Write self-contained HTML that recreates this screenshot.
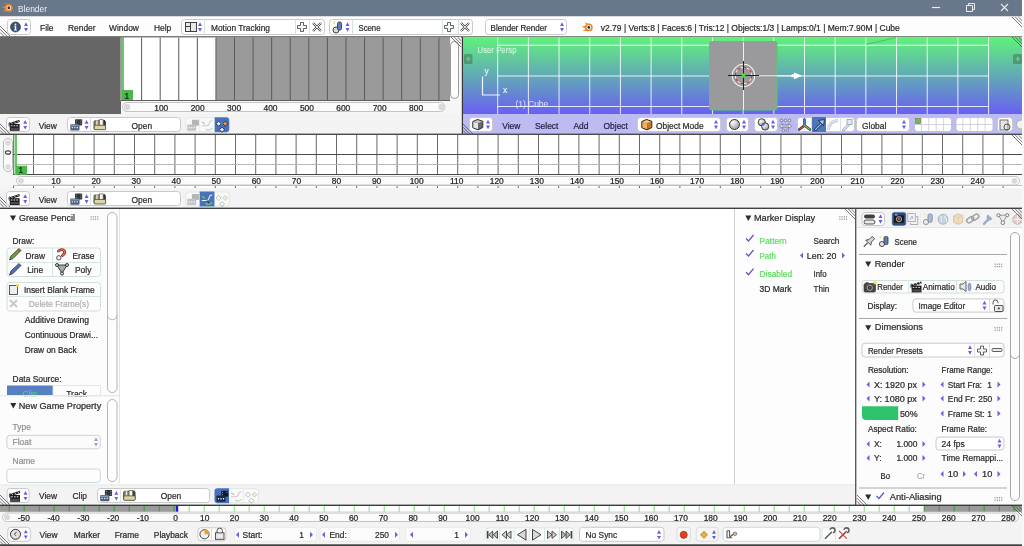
<!DOCTYPE html><html><head><meta charset="utf-8"><style>html,body{margin:0;padding:0;background:#fff;width:1024px;height:546px;overflow:hidden}svg{display:block;will-change:transform}text{font-family:"Liberation Sans",sans-serif}</style></head><body><svg width="1024" height="546" viewBox="0 0 1024 546" font-family="Liberation Sans, sans-serif">
<defs><linearGradient id="g3d" x1="0" y1="0" x2="0" y2="1"><stop offset="0" stop-color="#60f27a"/><stop offset="0.5" stop-color="#62aab6"/><stop offset="1" stop-color="#6860f2"/></linearGradient></defs>
<rect x="0" y="0" width="1024" height="546" fill="#ffffff" />
<rect x="0" y="0" width="1022" height="16.5" fill="#687789" />
<g><circle cx="8.8" cy="7.9" r="3.9" fill="#e8862a"/><path d="M6.5,4.8 L4,3 L8.5,4 Z M5.5,6 L1.8,7.2 L5.5,8.8 Z M5.8,9.5 L2.5,11.2 L7.5,11.6 Z" fill="#e8862a"/><circle cx="8.8" cy="7.9" r="2.4" fill="#f4e0c8"/><circle cx="8.8" cy="7.9" r="1.3" fill="#1a3050"/></g>
<text x="18" y="11.9" font-size="9.66" fill="#eef1f5" stroke="#eef1f5" stroke-width="0" text-anchor="start" textLength="29" lengthAdjust="spacingAndGlyphs" >Blender</text>
<line x1="932" y1="7.5" x2="940" y2="7.5" stroke="#e8ecf0" stroke-width="1.2" />
<path d="M966.5,5.5 h6 v6 h-6 z M968.5,5.5 v-2 h6 v6 h-2" fill="none" stroke="#e8ecf0" stroke-width="1"/>
<path d="M1001,4 L1008,11 M1008,4 L1001,11" stroke="#e8ecf0" stroke-width="1.1"/>
<rect x="0" y="16.5" width="1022" height="19.5" fill="#fdfdfd" />
<line x1="0" y1="26.0" x2="10.0" y2="36" stroke="#505050" stroke-width="0.8" />
<line x1="0" y1="29.2" x2="6.8" y2="36" stroke="#505050" stroke-width="0.8" />
<line x1="0" y1="32.4" x2="3.5999999999999996" y2="36" stroke="#505050" stroke-width="0.8" />
<rect x="7.5" y="19.5" width="23" height="15" fill="#ffffff" stroke="#c9c9c9" stroke-width="1" rx="3" />
<circle cx="15.5" cy="27" r="5" fill="#3b5175" stroke="#202a40" stroke-width="0.6"/><circle cx="15.5" cy="24.3" r="0.9" fill="#fff"/><path d="M14.2,25.8 h2 v4 h0.8 v0.8 h-3 v-0.8 h0.8 v-3.2 h-0.6 z" fill="#fff"/>
<path d="M24,25.9 L26,22.3 L28,25.9 Z M24,28.1 L26,31.7 L28,28.1 Z" fill="#6b5fe0"/>
<text x="40" y="30.5" font-size="8.82" fill="#2a2a2a" stroke="#2a2a2a" stroke-width="0.22" text-anchor="start" textLength="13.53" lengthAdjust="spacingAndGlyphs" >File</text>
<text x="68" y="30.5" font-size="8.82" fill="#2a2a2a" stroke="#2a2a2a" stroke-width="0.22" text-anchor="start" textLength="27.55" lengthAdjust="spacingAndGlyphs" >Render</text>
<text x="109" y="30.5" font-size="8.82" fill="#2a2a2a" stroke="#2a2a2a" stroke-width="0.22" text-anchor="start" textLength="29.88" lengthAdjust="spacingAndGlyphs" >Window</text>
<text x="154" y="30.5" font-size="8.82" fill="#2a2a2a" stroke="#2a2a2a" stroke-width="0.22" text-anchor="start" textLength="17.28" lengthAdjust="spacingAndGlyphs" >Help</text>
<rect x="181.5" y="19.5" width="143" height="15" fill="#ffffff" stroke="#c9c9c9" stroke-width="1" rx="3" />
<line x1="204.5" y1="19.5" x2="204.5" y2="34.5" stroke="#d6e2e0" stroke-width="1" />
<line x1="295.5" y1="19.5" x2="295.5" y2="34.5" stroke="#d6e2e0" stroke-width="1" />
<line x1="309.5" y1="19.5" x2="309.5" y2="34.5" stroke="#d6e2e0" stroke-width="1" />
<rect x="185.5" y="22.5" width="11" height="9" fill="#e8e8e8" stroke="#404040" stroke-width="1"/><line x1="190.5" y1="22.5" x2="190.5" y2="31.5" stroke="#404040"/><line x1="185.5" y1="26.5" x2="190.5" y2="26.5" stroke="#404040"/>
<path d="M198,25.9 L200,22.3 L202,25.9 Z M198,28.1 L200,31.7 L202,28.1 Z" fill="#6b5fe0"/>
<text x="211" y="30.5" font-size="8.82" fill="#2a2a2a" stroke="#2a2a2a" stroke-width="0.22" text-anchor="start" textLength="59" lengthAdjust="spacingAndGlyphs" >Motion Tracking</text>
<path d="M300.5,22.5 h3 v3 h3 v3 h-3 v3 h-3 v-3 h-3 v-3 h3 z" fill="#f4f4f4" stroke="#505050" stroke-width="0.9"/>
<path d="M313,23 L321,31 M321,23 L313,31" stroke="#505050" stroke-width="2.2"/><path d="M313,23 L321,31 M321,23 L313,31" stroke="#f0f0f0" stroke-width="0.9"/>
<rect x="329.5" y="19.5" width="143" height="15" fill="#ffffff" stroke="#c9c9c9" stroke-width="1" rx="3" />
<line x1="352.5" y1="19.5" x2="352.5" y2="34.5" stroke="#d6e2e0" stroke-width="1" />
<line x1="442.5" y1="19.5" x2="442.5" y2="34.5" stroke="#d6e2e0" stroke-width="1" />
<line x1="458.5" y1="19.5" x2="458.5" y2="34.5" stroke="#d6e2e0" stroke-width="1" />
<circle cx="336" cy="30" r="3" fill="#d8d8d8" stroke="#303030" stroke-width="0.9"/><rect x="337.5" y="22" width="4" height="8" rx="1.5" fill="#5b7fb8" stroke="#303030" stroke-width="0.8"/><circle cx="334" cy="22.5" r="1.2" fill="#f0e060"/>
<path d="M345.5,25.9 L347.5,22.3 L349.5,25.9 Z M345.5,28.1 L347.5,31.7 L349.5,28.1 Z" fill="#6b5fe0"/>
<text x="358.5" y="30.5" font-size="8.82" fill="#2a2a2a" stroke="#2a2a2a" stroke-width="0.22" text-anchor="start" textLength="22" lengthAdjust="spacingAndGlyphs" >Scene</text>
<path d="M447.5,22.5 h3 v3 h3 v3 h-3 v3 h-3 v-3 h-3 v-3 h3 z" fill="#f4f4f4" stroke="#505050" stroke-width="0.9"/>
<path d="M461,23 L469,31 M469,23 L461,31" stroke="#505050" stroke-width="2.2"/><path d="M461,23 L469,31 M469,23 L461,31" stroke="#f0f0f0" stroke-width="0.9"/>
<rect x="485.5" y="19.5" width="81" height="15" fill="#ffffff" stroke="#c9c9c9" stroke-width="1" rx="3" />
<text x="490.5" y="30.5" font-size="8.82" fill="#2a2a2a" stroke="#2a2a2a" stroke-width="0.22" text-anchor="start" textLength="56.5" lengthAdjust="spacingAndGlyphs" >Blender Render</text>
<path d="M560,25.9 L562,22.3 L564,25.9 Z M560,28.1 L562,31.7 L564,28.1 Z" fill="#6b5fe0"/>
<g transform="translate(580,19.5)"><circle cx="8.8" cy="7.9" r="3.9" fill="#e8862a"/><path d="M6.5,4.8 L4,3 L8.5,4 Z M5.5,6 L1.8,7.2 L5.5,8.8 Z M5.8,9.5 L2.5,11.2 L7.5,11.6 Z" fill="#e8862a"/><circle cx="8.8" cy="7.9" r="2.4" fill="#f8f0e8"/><circle cx="8.8" cy="7.9" r="1.3" fill="#1a3050"/></g>
<text x="600.8" y="30.5" font-size="8.82" fill="#2a2a2a" stroke="#2a2a2a" stroke-width="0.22" text-anchor="start" textLength="299" lengthAdjust="spacingAndGlyphs" >v2.79 | Verts:8 | Faces:6 | Tris:12 | Objects:1/3 | Lamps:0/1 | Mem:7.90M | Cube</text>
<line x1="1012.0" y1="17" x2="1022" y2="27.0" stroke="#505050" stroke-width="0.8" />
<line x1="1015.2" y1="17" x2="1022" y2="23.8" stroke="#505050" stroke-width="0.8" />
<line x1="1018.4" y1="17" x2="1022" y2="20.6" stroke="#505050" stroke-width="0.8" />
<rect x="0" y="36" width="462" height="0.8" fill="#8a8a8a" />
<rect x="0" y="36.6" width="462" height="1" fill="#4a4a4a" />
<rect x="0" y="37" width="121" height="77" fill="#666666" />
<rect x="120" y="37.6" width="330" height="63" fill="#9a9a9a" />
<rect x="124" y="37.6" width="92" height="63" fill="#ffffff" />
<rect x="141.1" y="37.6" width="1" height="63" fill="#5a5a5a" />
<rect x="159.68" y="37.6" width="1" height="63" fill="#5a5a5a" />
<rect x="178.26" y="37.6" width="1" height="63" fill="#5a5a5a" />
<rect x="196.83999999999997" y="37.6" width="1" height="63" fill="#5a5a5a" />
<rect x="215.42" y="37.6" width="1" height="63" fill="#5a5a5a" />
<rect x="234.0" y="37.6" width="1" height="63" fill="#5a5a5a" />
<rect x="252.57999999999998" y="37.6" width="1" height="63" fill="#5a5a5a" />
<rect x="271.15999999999997" y="37.6" width="1" height="63" fill="#5a5a5a" />
<rect x="289.74" y="37.6" width="1" height="63" fill="#5a5a5a" />
<rect x="308.31999999999994" y="37.6" width="1" height="63" fill="#5a5a5a" />
<rect x="326.9" y="37.6" width="1" height="63" fill="#5a5a5a" />
<rect x="345.48" y="37.6" width="1" height="63" fill="#5a5a5a" />
<rect x="364.05999999999995" y="37.6" width="1" height="63" fill="#5a5a5a" />
<rect x="382.64" y="37.6" width="1" height="63" fill="#5a5a5a" />
<rect x="401.22" y="37.6" width="1" height="63" fill="#5a5a5a" />
<rect x="419.79999999999995" y="37.6" width="1" height="63" fill="#5a5a5a" />
<rect x="438.38" y="37.6" width="1" height="63" fill="#5a5a5a" />
<rect x="121.5" y="37.6" width="2.5" height="63" fill="#6cc46c" />
<rect x="122" y="90" width="11" height="10.5" fill="#4cb84c" />
<text x="124.5" y="98.5" font-size="8.82" fill="#102010" stroke="#102010" stroke-width="0.22" text-anchor="start" textLength="4.67" lengthAdjust="spacingAndGlyphs" >1</text>
<rect x="121" y="100" width="341" height="1" fill="#606060" />
<rect x="121" y="101" width="341" height="13" fill="#f6f6f6" />
<rect x="122.5" y="102.5" width="322.5" height="9" rx="4.5" fill="#fbfbfb" stroke="#c4c4c4" stroke-width="1"/>
<circle cx="127" cy="107" r="3.2" fill="#d9d9d9"/>
<circle cx="441.5" cy="107" r="3.2" fill="#d9d9d9"/>
<text x="161.3" y="110.5" font-size="8.82" fill="#202020" stroke="#202020" stroke-width="0.22" text-anchor="middle" textLength="14.01" lengthAdjust="spacingAndGlyphs" >100</text>
<text x="197.70000000000002" y="110.5" font-size="8.82" fill="#202020" stroke="#202020" stroke-width="0.22" text-anchor="middle" textLength="14.01" lengthAdjust="spacingAndGlyphs" >200</text>
<text x="234.10000000000002" y="110.5" font-size="8.82" fill="#202020" stroke="#202020" stroke-width="0.22" text-anchor="middle" textLength="14.01" lengthAdjust="spacingAndGlyphs" >300</text>
<text x="270.5" y="110.5" font-size="8.82" fill="#202020" stroke="#202020" stroke-width="0.22" text-anchor="middle" textLength="14.01" lengthAdjust="spacingAndGlyphs" >400</text>
<text x="306.9" y="110.5" font-size="8.82" fill="#202020" stroke="#202020" stroke-width="0.22" text-anchor="middle" textLength="14.01" lengthAdjust="spacingAndGlyphs" >500</text>
<text x="343.3" y="110.5" font-size="8.82" fill="#202020" stroke="#202020" stroke-width="0.22" text-anchor="middle" textLength="14.01" lengthAdjust="spacingAndGlyphs" >600</text>
<text x="379.7" y="110.5" font-size="8.82" fill="#202020" stroke="#202020" stroke-width="0.22" text-anchor="middle" textLength="14.01" lengthAdjust="spacingAndGlyphs" >700</text>
<text x="416.1" y="110.5" font-size="8.82" fill="#202020" stroke="#202020" stroke-width="0.22" text-anchor="middle" textLength="14.01" lengthAdjust="spacingAndGlyphs" >800</text>
<rect x="450" y="37" width="12" height="64" fill="#f6f6f6" />
<rect x="450.5" y="41.5" width="8" height="57" rx="4" fill="#fdfdfd" stroke="#9a9a9a" stroke-width="1"/>
<line x1="451.0" y1="37" x2="461" y2="47.0" stroke="#505050" stroke-width="0.8" />
<line x1="454.2" y1="37" x2="461" y2="43.8" stroke="#505050" stroke-width="0.8" />
<line x1="457.4" y1="37" x2="461" y2="40.6" stroke="#505050" stroke-width="0.8" />
<rect x="0" y="114" width="462" height="20" fill="#f3f3f3" />
<line x1="0" y1="124.0" x2="10.0" y2="134" stroke="#505050" stroke-width="0.8" />
<line x1="0" y1="127.2" x2="6.8" y2="134" stroke="#505050" stroke-width="0.8" />
<line x1="0" y1="130.4" x2="3.5999999999999996" y2="134" stroke="#505050" stroke-width="0.8" />
<rect x="6.5" y="117.5" width="23" height="14" fill="#ffffff" stroke="#c9c9c9" stroke-width="1" rx="3" />
<g transform="translate(8.6,118.6)"><path d="M0.2,4.6 L10.6,1.2 L11.3,3.4 L0.9,6.8 Z" fill="#202228"/><path d="M2.6,3.9 L4.2,5.8 M5.6,2.9 L7.2,4.8 M8.6,1.9 L10.2,3.8" stroke="#d8dce0" stroke-width="0.9"/><rect x="1.2" y="5.4" width="9.8" height="6.8" fill="#1c1c20"/><path d="M2.2,7.2 h1.6 M5,7.2 h1.6 M7.8,7.2 h1.6" stroke="#e8e8e8" stroke-width="1"/><rect x="2" y="9.2" width="8.2" height="2.2" fill="#4a4a50"/><path d="M1.2,3.5 a1.6,2.6 0 0 0 0,4.6" stroke="#4a6a98" stroke-width="1.1" fill="none"/></g>
<path d="M23.2,123.7 L25.2,120.1 L27.2,123.7 Z M23.2,125.89999999999999 L25.2,129.5 L27.2,125.89999999999999 Z" fill="#6b5fe0"/>
<text x="38.7" y="128.6" font-size="8.82" fill="#2a2a2a" stroke="#2a2a2a" stroke-width="0.22" text-anchor="start" textLength="18.05" lengthAdjust="spacingAndGlyphs" >View</text>
<rect x="67.5" y="117.5" width="113" height="14" fill="#ffffff" stroke="#c9c9c9" stroke-width="1" rx="3" />
<line x1="90.5" y1="117.5" x2="90.5" y2="131.5" stroke="#d6e2e0" stroke-width="1" />
<g transform="translate(70.3,119.3)"><rect x="4.7" y="0" width="7.2" height="6.1" rx="0.8" fill="#30343c"/><path d="M6,1.2 v1 M6,3.6 v1 M10.6,1.2 v1 M10.6,3.6 v1" stroke="#b8c0c8" stroke-width="0.8"/><rect x="0" y="4.9" width="9.2" height="6.4" rx="0.8" fill="#50607a"/><rect x="0.8" y="5.7" width="7.6" height="1.2" fill="#8aa0c8"/><path d="M1.4,8.4 h1.2 M3.9,8.4 h1.2 M6.4,8.4 h1.2" stroke="#f0f4ff" stroke-width="1.3"/></g>
<path d="M84.6,123.7 L86.6,120.1 L88.6,123.7 Z M84.6,125.89999999999999 L86.6,129.5 L88.6,125.89999999999999 Z" fill="#6b5fe0"/>
<g transform="translate(94,119.7)"><rect x="0" y="1" width="11.5" height="8.8" rx="1.2" fill="#8a8670" stroke="#3a3828" stroke-width="0.8"/><rect x="5.5" y="0" width="3.6" height="6" fill="#f4f4f0" stroke="#505040" stroke-width="0.6"/><rect x="9.6" y="0.4" width="1.4" height="5.4" fill="#303028"/><rect x="2.2" y="0.6" width="1.4" height="5.4" fill="#e8e4d8"/><path d="M0.2,5.6 H11.6 V9.2 a0.8,0.8 0 0 1 -0.8,0.8 H1 a0.8,0.8 0 0 1 -0.8,-0.8 Z" fill="#ddd5a8" stroke="#4a4630" stroke-width="0.7"/></g>
<text x="141.8" y="128.6" font-size="8.82" fill="#2a2a2a" stroke="#2a2a2a" stroke-width="0.22" text-anchor="middle" textLength="20.55" lengthAdjust="spacingAndGlyphs" >Open</text>
<rect x="185.7" y="117.7" width="43.5" height="14" rx="3" fill="#fafafa" stroke="#e0e6e4" stroke-width="1"/>
<line x1="199.7" y1="118.2" x2="199.7" y2="131.2" stroke="#e4ecea"/><line x1="214.39999999999998" y1="118.2" x2="214.39999999999998" y2="131.2" stroke="#e4ecea"/>
<path d="M214.7,117.2 h11.5 a3,3 0 0 1 3,3 v9 a3,3 0 0 1 -3,3 h-11.5 z" fill="#4a72b8"/>
<g transform="translate(187.2,119.7)" opacity="0.45"><rect x="4.7" y="0" width="7" height="6" rx="0.8" fill="#606060"/><rect x="0" y="4.8" width="9" height="6.2" rx="0.8" fill="#7a8290"/><path d="M1.4,8 h1.2 M3.9,8 h1.2 M6.4,8 h1.2" stroke="#f0f4ff" stroke-width="1.3"/></g>
<g transform="translate(200.7,119.2)" opacity="0.5"><path d="M1,6.5 H6 Q8,6.5 8.5,4 Q9,1.5 11.5,1.5" stroke="#a0a0a0" stroke-width="1.1" fill="none"/><path d="M1,3 Q3,3 4,5" stroke="#909090" stroke-width="1.2" fill="none"/><path d="M5,10 Q8,12 11.5,9" stroke="#90c090" stroke-width="1.4" fill="none"/></g>
<g transform="translate(215.2,119.2)"><path d="M4,4.5 H9" stroke="#c0c0c0" stroke-width="1"/><path d="M0.8999999999999999,4.5 L3.5,1.9 L6.1,4.5 L3.5,7.1 Z" fill="#d8e4f4" stroke="#102040" stroke-width="0.8"/><path d="M7.4,4.5 L10,1.9 L12.6,4.5 L10,7.1 Z" fill="#f09050" stroke="#102040" stroke-width="0.8"/><path d="M4.199999999999999,10.5 L6.8,7.9 L9.4,10.5 L6.8,13.1 Z" fill="#d8e4f4" stroke="#102040" stroke-width="0.8"/></g>
<rect x="461" y="36" width="561" height="0.8" fill="#8a9a8a" />
<rect x="461" y="36.6" width="561" height="1" fill="#4a5a4a" />
<rect x="461.8" y="37" width="1.3" height="97" fill="#383838" />
<rect x="463" y="37" width="559" height="77" fill="url(#g3d)" />
<line x1="497.7" y1="37.6" x2="497.7" y2="114" stroke="rgba(255,255,255,0.85)" stroke-width="1" />
<line x1="528.38" y1="37.6" x2="528.38" y2="114" stroke="rgba(255,255,255,0.85)" stroke-width="1" />
<line x1="559.06" y1="37.6" x2="559.06" y2="114" stroke="rgba(255,255,255,0.85)" stroke-width="1" />
<line x1="589.74" y1="37.6" x2="589.74" y2="114" stroke="rgba(255,255,255,0.85)" stroke-width="1" />
<line x1="620.42" y1="37.6" x2="620.42" y2="114" stroke="rgba(255,255,255,0.85)" stroke-width="1" />
<line x1="651.1" y1="37.6" x2="651.1" y2="114" stroke="rgba(255,255,255,0.85)" stroke-width="1" />
<line x1="681.78" y1="37.6" x2="681.78" y2="114" stroke="rgba(255,255,255,0.85)" stroke-width="1" />
<line x1="712.46" y1="37.6" x2="712.46" y2="114" stroke="rgba(255,255,255,0.85)" stroke-width="1" />
<line x1="743.14" y1="37.6" x2="743.14" y2="114" stroke="rgba(255,255,255,0.85)" stroke-width="1" />
<line x1="773.8199999999999" y1="37.6" x2="773.8199999999999" y2="114" stroke="rgba(255,255,255,0.85)" stroke-width="1" />
<line x1="804.5" y1="37.6" x2="804.5" y2="114" stroke="rgba(255,255,255,0.85)" stroke-width="1" />
<line x1="835.1800000000001" y1="37.6" x2="835.1800000000001" y2="114" stroke="rgba(255,255,255,0.85)" stroke-width="1" />
<line x1="865.8599999999999" y1="37.6" x2="865.8599999999999" y2="114" stroke="rgba(255,255,255,0.85)" stroke-width="1" />
<line x1="896.54" y1="37.6" x2="896.54" y2="114" stroke="rgba(255,255,255,0.85)" stroke-width="1" />
<line x1="927.22" y1="37.6" x2="927.22" y2="114" stroke="rgba(255,255,255,0.85)" stroke-width="1" />
<line x1="957.9" y1="37.6" x2="957.9" y2="114" stroke="rgba(255,255,255,0.85)" stroke-width="1" />
<line x1="988.5799999999999" y1="37.6" x2="988.5799999999999" y2="114" stroke="rgba(255,255,255,0.85)" stroke-width="1" />
<line x1="497.7" y1="45.2" x2="988.5" y2="45.2" stroke="rgba(255,255,255,0.85)" stroke-width="1" />
<line x1="497.7" y1="76" x2="988.5" y2="76" stroke="rgba(255,255,255,0.85)" stroke-width="1" />
<line x1="497.7" y1="106.5" x2="988.5" y2="106.5" stroke="rgba(255,255,255,0.85)" stroke-width="1" />
<rect x="709.5" y="41.5" width="67.5" height="68.5" rx="2" fill="#9a9a9c" stroke="#4ad060" stroke-width="1"/>
<line x1="743.5" y1="42" x2="743.5" y2="110" stroke="rgba(255,255,255,0.85)" stroke-width="1" />
<line x1="756" y1="75.8" x2="792" y2="75.8" stroke="rgba(255,255,255,0.85)" stroke-width="1" />
<path d="M791.5,74.3 h2.5 v-1.8 L802.3,75.8 L794,79.2 v-1.9 h-2.5 Z" fill="#ffffff"/>
<circle cx="743.5" cy="75.5" r="11.2" fill="none" stroke="#f4f4f4" stroke-width="1.1"/>
<circle cx="743.5" cy="75.5" r="8.2" fill="none" stroke="#f0f0f0" stroke-width="1"/>
<circle cx="743.5" cy="75.5" r="8.2" fill="none" stroke="#d03030" stroke-width="1.1" stroke-dasharray="3 3.45"/>
<line x1="728" y1="75.5" x2="759" y2="75.5" stroke="#202020" stroke-width="1" />
<line x1="743.5" y1="61" x2="743.5" y2="90" stroke="#202020" stroke-width="1" />
<ellipse cx="743.5" cy="75.5" rx="1.8" ry="2.3" fill="#40e040"/>
<path d="M482.5,76.5 V95 H500" stroke="#ffffff" stroke-width="1.2" fill="none" opacity="0.9"/>
<text x="484.5" y="74" font-size="8.82" fill="rgba(255,255,255,0.8)" stroke="rgba(255,255,255,0.8)" stroke-width="0.22" text-anchor="start" textLength="4.2" lengthAdjust="spacingAndGlyphs" >y</text>
<text x="503" y="93" font-size="8.82" fill="rgba(255,255,255,0.8)" stroke="rgba(255,255,255,0.8)" stroke-width="0.22" text-anchor="start" textLength="4.2" lengthAdjust="spacingAndGlyphs" >x</text>
<text x="477.5" y="52.5" font-size="8.82" fill="rgba(255,255,255,0.7)" stroke="rgba(255,255,255,0.7)" stroke-width="0.1" text-anchor="start" textLength="39" lengthAdjust="spacingAndGlyphs" >User Persp</text>
<text x="515.5" y="106.5" font-size="8.82" fill="rgba(255,255,255,0.7)" stroke="rgba(255,255,255,0.7)" stroke-width="0.1" text-anchor="start" textLength="32.68" lengthAdjust="spacingAndGlyphs" >(1) Cube</text>
<rect x="464" y="54" width="8.5" height="10" fill="rgba(60,120,80,0.55)" rx="1.5" />
<path d="M466,59 h4.5 M468.25,56.75 v4.5" stroke="rgba(255,255,255,0.35)" stroke-width="1.2"/>
<rect x="1013" y="54" width="9" height="10" fill="rgba(60,120,80,0.55)" rx="1.5" />
<path d="M1015.5,59 h4.5 M1017.75,56.75 v4.5" stroke="rgba(255,255,255,0.35)" stroke-width="1.2"/>
<line x1="866" y1="44.5" x2="896" y2="37.6" stroke="#3a9a50" stroke-width="0.8" opacity="0.7"/>
<line x1="1012.0" y1="37" x2="1022" y2="47.0" stroke="#505050" stroke-width="0.8" />
<line x1="1015.2" y1="37" x2="1022" y2="43.8" stroke="#505050" stroke-width="0.8" />
<line x1="1018.4" y1="37" x2="1022" y2="40.6" stroke="#505050" stroke-width="0.8" />
<rect x="463" y="114" width="559" height="20" fill="#bcbcf2" />
<line x1="463" y1="124.0" x2="473.0" y2="134" stroke="#505050" stroke-width="0.8" />
<line x1="463" y1="127.2" x2="469.8" y2="134" stroke="#505050" stroke-width="0.8" />
<line x1="463" y1="130.4" x2="466.6" y2="134" stroke="#505050" stroke-width="0.8" />
<rect x="469.5" y="117.5" width="23" height="14" fill="#ffffff" stroke="#c9c9c9" stroke-width="1" rx="3" />
<g transform="translate(472.5,119.5)"><path d="M0.3,2 L5,0 L10.3,1.8 L10.3,8 L5.5,10.4 L0.3,8.2 Z" fill="#505050" stroke="#303030" stroke-width="1"/><path d="M0.8,2.4 L5.6,3.6 L5.6,9.8 L0.8,7.9 Z" fill="#e4e4e4"/><path d="M5.6,3.6 L9.8,2.2 L9.8,7.8 L5.6,9.8 Z" fill="#6a6a6a"/><path d="M0.8,2.4 L5,0.6 L9.8,2.2 L5.6,3.6 Z" fill="#c8c8c8"/></g>
<path d="M486,123.4 L488,119.8 L490,123.4 Z M486,125.6 L488,129.2 L490,125.6 Z" fill="#6b5fe0"/>
<text x="502.3" y="128.6" font-size="8.82" fill="#22224a" stroke="#22224a" stroke-width="0.22" text-anchor="start" textLength="18.05" lengthAdjust="spacingAndGlyphs" >View</text>
<text x="535" y="128.6" font-size="8.82" fill="#22224a" stroke="#22224a" stroke-width="0.22" text-anchor="start" textLength="23.35" lengthAdjust="spacingAndGlyphs" >Select</text>
<text x="573.5" y="128.6" font-size="8.82" fill="#22224a" stroke="#22224a" stroke-width="0.22" text-anchor="start" textLength="14.95" lengthAdjust="spacingAndGlyphs" >Add</text>
<text x="603.6" y="128.6" font-size="8.82" fill="#22224a" stroke="#22224a" stroke-width="0.22" text-anchor="start" textLength="24.28" lengthAdjust="spacingAndGlyphs" >Object</text>
<rect x="637.5" y="117.5" width="83" height="14" fill="#ffffff" stroke="#c9c9c9" stroke-width="1" rx="3" />
<g transform="translate(641.5,119.5)"><path d="M0.3,2 L5,0 L10.3,1.8 L10.3,8 L5.5,10.4 L0.3,8.2 Z" fill="#704010" stroke="#402008" stroke-width="1"/><path d="M0.8,2.4 L5.6,3.6 L5.6,9.8 L0.8,7.9 Z" fill="#f0b060"/><path d="M5.6,3.6 L9.8,2.2 L9.8,7.8 L5.6,9.8 Z" fill="#c07830"/><path d="M0.8,2.4 L5,0.6 L9.8,2.2 L5.6,3.6 Z" fill="#f8d090"/></g>
<text x="656" y="128.6" font-size="8.82" fill="#2a2a2a" stroke="#2a2a2a" stroke-width="0.22" text-anchor="start" textLength="47.62" lengthAdjust="spacingAndGlyphs" >Object Mode</text>
<path d="M714,123.4 L716,119.8 L718,123.4 Z M714,125.6 L716,129.2 L718,125.6 Z" fill="#6b5fe0"/>
<rect x="726.5" y="117.5" width="22" height="14" fill="#ffffff" stroke="#c9c9c9" stroke-width="1" rx="3" />
<defs><radialGradient id="ball" cx="0.35" cy="0.3" r="0.8"><stop offset="0" stop-color="#ffffff"/><stop offset="1" stop-color="#909090"/></radialGradient></defs><circle cx="734.5" cy="124.5" r="5" fill="url(#ball)" stroke="#303030" stroke-width="1"/>
<path d="M742,123.4 L744,119.8 L746,123.4 Z M742,125.6 L744,129.2 L746,125.6 Z" fill="#6b5fe0"/>
<rect x="754.5" y="117.5" width="23" height="14" fill="#ffffff" stroke="#c9c9c9" stroke-width="1" rx="3" />
<circle cx="761.8" cy="122.3" r="3.6" fill="url(#ball)" stroke="#303030" stroke-width="0.9"/><circle cx="765.2" cy="126.5" r="3.6" fill="url(#ball)" stroke="#303030" stroke-width="0.9"/><circle cx="763.5" cy="124.6" r="1.2" fill="#5070c0"/>
<path d="M771,123.4 L773,119.8 L775,123.4 Z M771,125.6 L773,129.2 L775,125.6 Z" fill="#6b5fe0"/>
<g transform="translate(778.5,118.5)" stroke="#606878" stroke-width="0.8" fill="#e8ecf4"><circle cx="3" cy="2" r="1.3"/><circle cx="7" cy="2" r="1.3"/><circle cx="11" cy="2" r="1.3"/><path d="M1,7.5 L3.5,5 V6.5 H10.5 V5 L13,7.5 L10.5,10 V8.5 H3.5 V10 Z"/><circle cx="5" cy="12" r="1.2"/><circle cx="9" cy="12" r="1.2"/></g>
<rect x="797.5" y="117.5" width="57" height="14" fill="#ffffff" stroke="#c9c9c9" stroke-width="1" rx="3" />
<line x1="811.5" y1="117.5" x2="811.5" y2="131.5" stroke="#d6e2e0" stroke-width="1" />
<line x1="840.5" y1="117.5" x2="840.5" y2="131.5" stroke="#d6e2e0" stroke-width="1" />
<rect x="812" y="117" width="14" height="15" fill="#4f77b8" />
<g transform="translate(798,118)"><path d="M6.5,1.5 V7.5 L1.2,11.5 M6.5,7.5 L12,11.5" stroke="#202020" stroke-width="2.4" fill="none" stroke-linecap="round"/><path d="M6.5,1.5 V7.5" stroke="#4a80e0" stroke-width="1.2" stroke-linecap="round"/><path d="M6.5,7.5 L1.2,11.5" stroke="#e05040" stroke-width="1.2" stroke-linecap="round"/><path d="M6.5,7.5 L12,11.5" stroke="#80d040" stroke-width="1.2" stroke-linecap="round"/></g>
<path d="M815.5,129.5 L821.5,123.5" stroke="#102040" stroke-width="2.6" stroke-linecap="round"/><path d="M815.5,129.5 L821.5,123.5" stroke="#a8c8f0" stroke-width="1.2" stroke-linecap="round"/><path d="M818.5,120.5 L824.5,119.5 L823.5,125.5 Z" fill="#a8c8f0" stroke="#102040" stroke-width="0.8"/>
<path d="M828.5,130 Q829,121 838,120.5" stroke="#8898b0" stroke-width="3" fill="none" opacity="0.6"/><path d="M828.5,130 Q829,121 838,120.5" stroke="#d8e4f4" stroke-width="1.6" fill="none"/>
<g opacity="0.8"><path d="M843.5,130 L849,124.5" stroke="#8898b0" stroke-width="2.6" stroke-linecap="round"/><path d="M843.5,130 L849,124.5" stroke="#d8e4f4" stroke-width="1.2"/><rect x="847" y="119.5" width="5" height="5" fill="#d8e4f4" stroke="#8898b0" stroke-width="1"/></g>
<rect x="856.5" y="117.5" width="53" height="14" fill="#ffffff" stroke="#c9c9c9" stroke-width="1" rx="3" />
<text x="862" y="128.6" font-size="8.82" fill="#2a2a2a" stroke="#2a2a2a" stroke-width="0.22" text-anchor="start" textLength="24.28" lengthAdjust="spacingAndGlyphs" >Global</text>
<path d="M902,123.4 L904,119.8 L906,123.4 Z M902,125.6 L904,129.2 L906,125.6 Z" fill="#6b5fe0"/>
<rect x="914.5" y="117.5" width="37" height="14" fill="#ffffff" stroke="#c0c0d8" stroke-width="1" rx="3" />
<line x1="921.4" y1="117.5" x2="921.4" y2="131.5" stroke="#c8c8d8" stroke-width="0.8" />
<line x1="928.8" y1="117.5" x2="928.8" y2="131.5" stroke="#c8c8d8" stroke-width="0.8" />
<line x1="936.2" y1="117.5" x2="936.2" y2="131.5" stroke="#c8c8d8" stroke-width="0.8" />
<line x1="943.6" y1="117.5" x2="943.6" y2="131.5" stroke="#c8c8d8" stroke-width="0.8" />
<line x1="914" y1="124.5" x2="952" y2="124.5" stroke="#c8c8d8" stroke-width="0.8" />
<rect x="956.0" y="117.5" width="37" height="14" fill="#ffffff" stroke="#c0c0d8" stroke-width="1" rx="3" />
<line x1="962.9" y1="117.5" x2="962.9" y2="131.5" stroke="#c8c8d8" stroke-width="0.8" />
<line x1="970.3" y1="117.5" x2="970.3" y2="131.5" stroke="#c8c8d8" stroke-width="0.8" />
<line x1="977.7" y1="117.5" x2="977.7" y2="131.5" stroke="#c8c8d8" stroke-width="0.8" />
<line x1="985.1" y1="117.5" x2="985.1" y2="131.5" stroke="#c8c8d8" stroke-width="0.8" />
<line x1="955.5" y1="124.5" x2="993.5" y2="124.5" stroke="#c8c8d8" stroke-width="0.8" />
<rect x="915.5" y="118.5" width="5" height="5" fill="#60c060" stroke="#806020" stroke-width="0.6" />
<rect x="997.5" y="117.5" width="15" height="14" fill="#ffffff" stroke="#c9c9c9" stroke-width="1" rx="3" />
<g transform="translate(1000,119)"><rect x="0" y="1" width="8" height="10" fill="#e8e8e8" stroke="#505050" stroke-width="0.8"/><circle cx="7" cy="8" r="3" fill="none" stroke="#505050" stroke-width="1"/></g>
<circle cx="1021" cy="124.5" r="4.5" fill="#f0f0f0" stroke="#a0a0a0" stroke-width="0.8"/>
<rect x="0" y="133.6" width="1022" height="1.4" fill="#4a4a4a" />
<rect x="0" y="135" width="1022" height="40" fill="#ffffff" />
<rect x="0" y="135" width="13" height="52" fill="#f6f6f6" />
<rect x="3.5" y="138.5" width="9" height="33" rx="4.5" fill="#fbfbfb" stroke="#b8b8b8" stroke-width="1"/>
<circle cx="8" cy="143" r="2.7" fill="#dadada"/><circle cx="8" cy="167" r="2.7" fill="#dadada"/>
<text transform="translate(11,152.5) rotate(-90)" font-size="8.4" fill="#202020" stroke="#202020" stroke-width="0.25" text-anchor="middle">0</text>
<rect x="13" y="135" width="1" height="40" fill="#808080" />
<rect x="33.0" y="135" width="1" height="40" fill="#6a6a6a" />
<rect x="53.2" y="135" width="1" height="40" fill="#6a6a6a" />
<rect x="73.4" y="135" width="1" height="40" fill="#6a6a6a" />
<rect x="93.6" y="135" width="1" height="40" fill="#6a6a6a" />
<rect x="113.8" y="135" width="1" height="40" fill="#6a6a6a" />
<rect x="134.0" y="135" width="1" height="40" fill="#6a6a6a" />
<rect x="154.2" y="135" width="1" height="40" fill="#6a6a6a" />
<rect x="174.4" y="135" width="1" height="40" fill="#6a6a6a" />
<rect x="194.6" y="135" width="1" height="40" fill="#6a6a6a" />
<rect x="214.79999999999998" y="135" width="1" height="40" fill="#6a6a6a" />
<rect x="235.0" y="135" width="1" height="40" fill="#6a6a6a" />
<rect x="255.2" y="135" width="1" height="40" fill="#6a6a6a" />
<rect x="275.4" y="135" width="1" height="40" fill="#6a6a6a" />
<rect x="295.59999999999997" y="135" width="1" height="40" fill="#6a6a6a" />
<rect x="315.8" y="135" width="1" height="40" fill="#6a6a6a" />
<rect x="336.0" y="135" width="1" height="40" fill="#6a6a6a" />
<rect x="356.2" y="135" width="1" height="40" fill="#6a6a6a" />
<rect x="376.4" y="135" width="1" height="40" fill="#6a6a6a" />
<rect x="396.59999999999997" y="135" width="1" height="40" fill="#6a6a6a" />
<rect x="416.8" y="135" width="1" height="40" fill="#6a6a6a" />
<rect x="437.0" y="135" width="1" height="40" fill="#6a6a6a" />
<rect x="457.2" y="135" width="1" height="40" fill="#6a6a6a" />
<rect x="477.4" y="135" width="1" height="40" fill="#6a6a6a" />
<rect x="497.59999999999997" y="135" width="1" height="40" fill="#6a6a6a" />
<rect x="517.8" y="135" width="1" height="40" fill="#6a6a6a" />
<rect x="538.0" y="135" width="1" height="40" fill="#6a6a6a" />
<rect x="558.1999999999999" y="135" width="1" height="40" fill="#6a6a6a" />
<rect x="578.4" y="135" width="1" height="40" fill="#6a6a6a" />
<rect x="598.6" y="135" width="1" height="40" fill="#6a6a6a" />
<rect x="618.8" y="135" width="1" height="40" fill="#6a6a6a" />
<rect x="639.0" y="135" width="1" height="40" fill="#6a6a6a" />
<rect x="659.1999999999999" y="135" width="1" height="40" fill="#6a6a6a" />
<rect x="679.4" y="135" width="1" height="40" fill="#6a6a6a" />
<rect x="699.6" y="135" width="1" height="40" fill="#6a6a6a" />
<rect x="719.8" y="135" width="1" height="40" fill="#6a6a6a" />
<rect x="740.0" y="135" width="1" height="40" fill="#6a6a6a" />
<rect x="760.1999999999999" y="135" width="1" height="40" fill="#6a6a6a" />
<rect x="780.4" y="135" width="1" height="40" fill="#6a6a6a" />
<rect x="800.6" y="135" width="1" height="40" fill="#6a6a6a" />
<rect x="820.8" y="135" width="1" height="40" fill="#6a6a6a" />
<rect x="841.0" y="135" width="1" height="40" fill="#6a6a6a" />
<rect x="861.1999999999999" y="135" width="1" height="40" fill="#6a6a6a" />
<rect x="881.4" y="135" width="1" height="40" fill="#6a6a6a" />
<rect x="901.6" y="135" width="1" height="40" fill="#6a6a6a" />
<rect x="921.8" y="135" width="1" height="40" fill="#6a6a6a" />
<rect x="942.0" y="135" width="1" height="40" fill="#6a6a6a" />
<rect x="962.1999999999999" y="135" width="1" height="40" fill="#6a6a6a" />
<rect x="982.4" y="135" width="1" height="40" fill="#6a6a6a" />
<rect x="1002.5999999999999" y="135" width="1" height="40" fill="#6a6a6a" />
<line x1="13" y1="154.5" x2="1022" y2="154.5" stroke="#4a4a4a" stroke-width="1" />
<line x1="13" y1="164.5" x2="1022" y2="164.5" stroke="#b8b8b8" stroke-width="1" />
<line x1="13" y1="174.5" x2="1022" y2="174.5" stroke="#4a4a4a" stroke-width="1" />
<rect x="14.5" y="135" width="2.5" height="40" fill="#6cc46c" />
<rect x="16" y="165.7" width="11" height="9" fill="#4cb84c" />
<text x="18.5" y="173" font-size="8.82" fill="#102010" stroke="#102010" stroke-width="0.22" text-anchor="start" textLength="4.67" lengthAdjust="spacingAndGlyphs" >1</text>
<line x1="1012.0" y1="135" x2="1022" y2="145.0" stroke="#505050" stroke-width="0.8" />
<line x1="1015.2" y1="135" x2="1022" y2="141.8" stroke="#505050" stroke-width="0.8" />
<line x1="1018.4" y1="135" x2="1022" y2="138.6" stroke="#505050" stroke-width="0.8" />
<rect x="13" y="175" width="1009" height="11" fill="#f6f6f6" />
<rect x="16.5" y="176.5" width="1003" height="8.5" rx="4.25" fill="#fbfbfb" stroke="#c4c4c4" stroke-width="1"/>
<circle cx="21" cy="180.8" r="2.9" fill="#d9d9d9"/><circle cx="1014.5" cy="180.8" r="2.9" fill="#d9d9d9"/>
<text x="56.0" y="184" font-size="8.82" fill="#202020" stroke="#202020" stroke-width="0.22" text-anchor="middle" textLength="9.34" lengthAdjust="spacingAndGlyphs" >10</text>
<text x="96.07" y="184" font-size="8.82" fill="#202020" stroke="#202020" stroke-width="0.22" text-anchor="middle" textLength="9.34" lengthAdjust="spacingAndGlyphs" >20</text>
<text x="136.14" y="184" font-size="8.82" fill="#202020" stroke="#202020" stroke-width="0.22" text-anchor="middle" textLength="9.34" lengthAdjust="spacingAndGlyphs" >30</text>
<text x="176.21" y="184" font-size="8.82" fill="#202020" stroke="#202020" stroke-width="0.22" text-anchor="middle" textLength="9.34" lengthAdjust="spacingAndGlyphs" >40</text>
<text x="216.28" y="184" font-size="8.82" fill="#202020" stroke="#202020" stroke-width="0.22" text-anchor="middle" textLength="9.34" lengthAdjust="spacingAndGlyphs" >50</text>
<text x="256.35" y="184" font-size="8.82" fill="#202020" stroke="#202020" stroke-width="0.22" text-anchor="middle" textLength="9.34" lengthAdjust="spacingAndGlyphs" >60</text>
<text x="296.42" y="184" font-size="8.82" fill="#202020" stroke="#202020" stroke-width="0.22" text-anchor="middle" textLength="9.34" lengthAdjust="spacingAndGlyphs" >70</text>
<text x="336.49" y="184" font-size="8.82" fill="#202020" stroke="#202020" stroke-width="0.22" text-anchor="middle" textLength="9.34" lengthAdjust="spacingAndGlyphs" >80</text>
<text x="376.56" y="184" font-size="8.82" fill="#202020" stroke="#202020" stroke-width="0.22" text-anchor="middle" textLength="9.34" lengthAdjust="spacingAndGlyphs" >90</text>
<text x="416.63" y="184" font-size="8.82" fill="#202020" stroke="#202020" stroke-width="0.22" text-anchor="middle" textLength="14.01" lengthAdjust="spacingAndGlyphs" >100</text>
<text x="456.7" y="184" font-size="8.82" fill="#202020" stroke="#202020" stroke-width="0.22" text-anchor="middle" textLength="13.39" lengthAdjust="spacingAndGlyphs" >110</text>
<text x="496.77" y="184" font-size="8.82" fill="#202020" stroke="#202020" stroke-width="0.22" text-anchor="middle" textLength="14.01" lengthAdjust="spacingAndGlyphs" >120</text>
<text x="536.84" y="184" font-size="8.82" fill="#202020" stroke="#202020" stroke-width="0.22" text-anchor="middle" textLength="14.01" lengthAdjust="spacingAndGlyphs" >130</text>
<text x="576.91" y="184" font-size="8.82" fill="#202020" stroke="#202020" stroke-width="0.22" text-anchor="middle" textLength="14.01" lengthAdjust="spacingAndGlyphs" >140</text>
<text x="616.98" y="184" font-size="8.82" fill="#202020" stroke="#202020" stroke-width="0.22" text-anchor="middle" textLength="14.01" lengthAdjust="spacingAndGlyphs" >150</text>
<text x="657.05" y="184" font-size="8.82" fill="#202020" stroke="#202020" stroke-width="0.22" text-anchor="middle" textLength="14.01" lengthAdjust="spacingAndGlyphs" >160</text>
<text x="697.12" y="184" font-size="8.82" fill="#202020" stroke="#202020" stroke-width="0.22" text-anchor="middle" textLength="14.01" lengthAdjust="spacingAndGlyphs" >170</text>
<text x="737.19" y="184" font-size="8.82" fill="#202020" stroke="#202020" stroke-width="0.22" text-anchor="middle" textLength="14.01" lengthAdjust="spacingAndGlyphs" >180</text>
<text x="777.26" y="184" font-size="8.82" fill="#202020" stroke="#202020" stroke-width="0.22" text-anchor="middle" textLength="14.01" lengthAdjust="spacingAndGlyphs" >190</text>
<text x="817.33" y="184" font-size="8.82" fill="#202020" stroke="#202020" stroke-width="0.22" text-anchor="middle" textLength="14.01" lengthAdjust="spacingAndGlyphs" >200</text>
<text x="857.4" y="184" font-size="8.82" fill="#202020" stroke="#202020" stroke-width="0.22" text-anchor="middle" textLength="14.01" lengthAdjust="spacingAndGlyphs" >210</text>
<text x="897.47" y="184" font-size="8.82" fill="#202020" stroke="#202020" stroke-width="0.22" text-anchor="middle" textLength="14.01" lengthAdjust="spacingAndGlyphs" >220</text>
<text x="937.54" y="184" font-size="8.82" fill="#202020" stroke="#202020" stroke-width="0.22" text-anchor="middle" textLength="14.01" lengthAdjust="spacingAndGlyphs" >230</text>
<text x="977.61" y="184" font-size="8.82" fill="#202020" stroke="#202020" stroke-width="0.22" text-anchor="middle" textLength="14.01" lengthAdjust="spacingAndGlyphs" >240</text>
<line x1="13" y1="185.5" x2="1022" y2="185.5" stroke="#c0c0c0" stroke-width="1" />
<rect x="12.8" y="186" width="1" height="2.5" fill="#6a6a6a" />
<rect x="33.0" y="186" width="1" height="2.5" fill="#6a6a6a" />
<rect x="53.2" y="186" width="1" height="2.5" fill="#6a6a6a" />
<rect x="73.4" y="186" width="1" height="2.5" fill="#6a6a6a" />
<rect x="93.6" y="186" width="1" height="2.5" fill="#6a6a6a" />
<rect x="113.8" y="186" width="1" height="2.5" fill="#6a6a6a" />
<rect x="134.0" y="186" width="1" height="2.5" fill="#6a6a6a" />
<rect x="154.2" y="186" width="1" height="2.5" fill="#6a6a6a" />
<rect x="174.4" y="186" width="1" height="2.5" fill="#6a6a6a" />
<rect x="194.6" y="186" width="1" height="2.5" fill="#6a6a6a" />
<rect x="214.79999999999998" y="186" width="1" height="2.5" fill="#6a6a6a" />
<rect x="235.0" y="186" width="1" height="2.5" fill="#6a6a6a" />
<rect x="255.2" y="186" width="1" height="2.5" fill="#6a6a6a" />
<rect x="275.4" y="186" width="1" height="2.5" fill="#6a6a6a" />
<rect x="295.59999999999997" y="186" width="1" height="2.5" fill="#6a6a6a" />
<rect x="315.8" y="186" width="1" height="2.5" fill="#6a6a6a" />
<rect x="336.0" y="186" width="1" height="2.5" fill="#6a6a6a" />
<rect x="356.2" y="186" width="1" height="2.5" fill="#6a6a6a" />
<rect x="376.4" y="186" width="1" height="2.5" fill="#6a6a6a" />
<rect x="396.59999999999997" y="186" width="1" height="2.5" fill="#6a6a6a" />
<rect x="416.8" y="186" width="1" height="2.5" fill="#6a6a6a" />
<rect x="437.0" y="186" width="1" height="2.5" fill="#6a6a6a" />
<rect x="457.2" y="186" width="1" height="2.5" fill="#6a6a6a" />
<rect x="477.4" y="186" width="1" height="2.5" fill="#6a6a6a" />
<rect x="497.59999999999997" y="186" width="1" height="2.5" fill="#6a6a6a" />
<rect x="517.8" y="186" width="1" height="2.5" fill="#6a6a6a" />
<rect x="538.0" y="186" width="1" height="2.5" fill="#6a6a6a" />
<rect x="558.1999999999999" y="186" width="1" height="2.5" fill="#6a6a6a" />
<rect x="578.4" y="186" width="1" height="2.5" fill="#6a6a6a" />
<rect x="598.6" y="186" width="1" height="2.5" fill="#6a6a6a" />
<rect x="618.8" y="186" width="1" height="2.5" fill="#6a6a6a" />
<rect x="639.0" y="186" width="1" height="2.5" fill="#6a6a6a" />
<rect x="659.1999999999999" y="186" width="1" height="2.5" fill="#6a6a6a" />
<rect x="679.4" y="186" width="1" height="2.5" fill="#6a6a6a" />
<rect x="699.6" y="186" width="1" height="2.5" fill="#6a6a6a" />
<rect x="719.8" y="186" width="1" height="2.5" fill="#6a6a6a" />
<rect x="740.0" y="186" width="1" height="2.5" fill="#6a6a6a" />
<rect x="760.1999999999999" y="186" width="1" height="2.5" fill="#6a6a6a" />
<rect x="780.4" y="186" width="1" height="2.5" fill="#6a6a6a" />
<rect x="800.6" y="186" width="1" height="2.5" fill="#6a6a6a" />
<rect x="820.8" y="186" width="1" height="2.5" fill="#6a6a6a" />
<rect x="841.0" y="186" width="1" height="2.5" fill="#6a6a6a" />
<rect x="861.1999999999999" y="186" width="1" height="2.5" fill="#6a6a6a" />
<rect x="881.4" y="186" width="1" height="2.5" fill="#6a6a6a" />
<rect x="901.6" y="186" width="1" height="2.5" fill="#6a6a6a" />
<rect x="921.8" y="186" width="1" height="2.5" fill="#6a6a6a" />
<rect x="942.0" y="186" width="1" height="2.5" fill="#6a6a6a" />
<rect x="962.1999999999999" y="186" width="1" height="2.5" fill="#6a6a6a" />
<rect x="982.4" y="186" width="1" height="2.5" fill="#6a6a6a" />
<rect x="1002.5999999999999" y="186" width="1" height="2.5" fill="#6a6a6a" />
<rect x="13" y="186" width="1" height="3" fill="#6a6a6a" />
<rect x="0" y="188" width="1022" height="20" fill="#f3f3f3" />
<rect x="0" y="186" width="13" height="2" fill="#f3f3f3" />
<line x1="0" y1="197.0" x2="10.0" y2="207" stroke="#505050" stroke-width="0.8" />
<line x1="0" y1="200.2" x2="6.8" y2="207" stroke="#505050" stroke-width="0.8" />
<line x1="0" y1="203.4" x2="3.5999999999999996" y2="207" stroke="#505050" stroke-width="0.8" />
<rect x="6.5" y="191.5" width="23" height="14" fill="#ffffff" stroke="#c9c9c9" stroke-width="1" rx="3" />
<g transform="translate(8.6,192.8)"><path d="M0.2,4.6 L10.6,1.2 L11.3,3.4 L0.9,6.8 Z" fill="#202228"/><path d="M2.6,3.9 L4.2,5.8 M5.6,2.9 L7.2,4.8 M8.6,1.9 L10.2,3.8" stroke="#d8dce0" stroke-width="0.9"/><rect x="1.2" y="5.4" width="9.8" height="6.8" fill="#1c1c20"/><path d="M2.2,7.2 h1.6 M5,7.2 h1.6 M7.8,7.2 h1.6" stroke="#e8e8e8" stroke-width="1"/><rect x="2" y="9.2" width="8.2" height="2.2" fill="#4a4a50"/><path d="M1.2,3.5 a1.6,2.6 0 0 0 0,4.6" stroke="#4a6a98" stroke-width="1.1" fill="none"/></g>
<path d="M23.2,197.9 L25.2,194.3 L27.2,197.9 Z M23.2,200.1 L25.2,203.7 L27.2,200.1 Z" fill="#6b5fe0"/>
<text x="38.7" y="202.8" font-size="8.82" fill="#2a2a2a" stroke="#2a2a2a" stroke-width="0.22" text-anchor="start" textLength="18.05" lengthAdjust="spacingAndGlyphs" >View</text>
<rect x="67.5" y="191.5" width="113" height="14" fill="#ffffff" stroke="#c9c9c9" stroke-width="1" rx="3" />
<line x1="90.5" y1="191.5" x2="90.5" y2="205.5" stroke="#d6e2e0" stroke-width="1" />
<g transform="translate(70.3,193.5)"><rect x="4.7" y="0" width="7.2" height="6.1" rx="0.8" fill="#30343c"/><path d="M6,1.2 v1 M6,3.6 v1 M10.6,1.2 v1 M10.6,3.6 v1" stroke="#b8c0c8" stroke-width="0.8"/><rect x="0" y="4.9" width="9.2" height="6.4" rx="0.8" fill="#50607a"/><rect x="0.8" y="5.7" width="7.6" height="1.2" fill="#8aa0c8"/><path d="M1.4,8.4 h1.2 M3.9,8.4 h1.2 M6.4,8.4 h1.2" stroke="#f0f4ff" stroke-width="1.3"/></g>
<path d="M84.6,197.9 L86.6,194.3 L88.6,197.9 Z M84.6,200.1 L86.6,203.7 L88.6,200.1 Z" fill="#6b5fe0"/>
<g transform="translate(94,193.9)"><rect x="0" y="1" width="11.5" height="8.8" rx="1.2" fill="#8a8670" stroke="#3a3828" stroke-width="0.8"/><rect x="5.5" y="0" width="3.6" height="6" fill="#f4f4f0" stroke="#505040" stroke-width="0.6"/><rect x="9.6" y="0.4" width="1.4" height="5.4" fill="#303028"/><rect x="2.2" y="0.6" width="1.4" height="5.4" fill="#e8e4d8"/><path d="M0.2,5.6 H11.6 V9.2 a0.8,0.8 0 0 1 -0.8,0.8 H1 a0.8,0.8 0 0 1 -0.8,-0.8 Z" fill="#ddd5a8" stroke="#4a4630" stroke-width="0.7"/></g>
<text x="141.8" y="202.8" font-size="8.82" fill="#2a2a2a" stroke="#2a2a2a" stroke-width="0.22" text-anchor="middle" textLength="20.55" lengthAdjust="spacingAndGlyphs" >Open</text>
<rect x="185.7" y="192.0" width="43.5" height="14" rx="3" fill="#fafafa" stroke="#e0e6e4" stroke-width="1"/>
<line x1="199.7" y1="192.5" x2="199.7" y2="205.5" stroke="#e4ecea"/><line x1="214.39999999999998" y1="192.5" x2="214.39999999999998" y2="205.5" stroke="#e4ecea"/>
<rect x="199.7" y="191.5" width="14.7" height="15" fill="#4a72b8"/>
<g transform="translate(187.2,194.0)" opacity="0.45"><rect x="4.7" y="0" width="7" height="6" rx="0.8" fill="#606060"/><rect x="0" y="4.8" width="9" height="6.2" rx="0.8" fill="#7a8290"/><path d="M1.4,8 h1.2 M3.9,8 h1.2 M6.4,8 h1.2" stroke="#f0f4ff" stroke-width="1.3"/></g>
<g transform="translate(200.7,193.5)"><path d="M1,7 H6 Q8,7 8.5,4 Q9,1.5 11.5,1.5" stroke="#f0f0f0" stroke-width="1.1" fill="none"/><path d="M1,3 Q3,3 4,5" stroke="#70d070" stroke-width="1.2" fill="none"/><path d="M5,10 Q8,12 11.5,9" stroke="#70d070" stroke-width="1.4" fill="none"/><path d="M6,7 Q8,8 8.5,10" stroke="#102040" stroke-width="0.9" fill="none"/></g>
<g transform="translate(215.2,193.5)" opacity="0.6"><path d="M0.8999999999999999,4.5 L3.5,1.9 L6.1,4.5 L3.5,7.1 Z" fill="none" stroke="#808080" stroke-width="0.8"/><path d="M7.4,4.5 L10,1.9 L12.6,4.5 L10,7.1 Z" fill="#f0d8c0" stroke="#c0a080" stroke-width="0.8"/><path d="M4.199999999999999,10.5 L6.8,7.9 L9.4,10.5 L6.8,13.1 Z" fill="none" stroke="#808080" stroke-width="0.8"/></g>
<rect x="0" y="207.6" width="1022" height="1.5" fill="#404040" />
<rect x="0" y="209" width="120" height="279" fill="#fcfcfc" />
<line x1="119.5" y1="209" x2="119.5" y2="488" stroke="#e4e4e4" stroke-width="1" />
<rect x="120" y="209" width="614" height="279" fill="#ffffff" />
<rect x="734" y="209" width="121" height="279" fill="#fdfdfd" />
<line x1="734.5" y1="209" x2="734.5" y2="488" stroke="#d0d0d0" stroke-width="1" />
<rect x="855" y="209" width="1.4" height="296" fill="#5a5a5a" />
<rect x="857" y="209" width="165" height="296" fill="#fcfcfc" />
<line x1="845.0" y1="209" x2="855" y2="219.0" stroke="#505050" stroke-width="0.8" />
<line x1="848.2" y1="209" x2="855" y2="215.8" stroke="#505050" stroke-width="0.8" />
<line x1="851.4" y1="209" x2="855" y2="212.6" stroke="#505050" stroke-width="0.8" />
<line x1="1012.0" y1="209" x2="1022" y2="219.0" stroke="#505050" stroke-width="0.8" />
<line x1="1015.2" y1="209" x2="1022" y2="215.8" stroke="#505050" stroke-width="0.8" />
<line x1="1018.4" y1="209" x2="1022" y2="212.6" stroke="#505050" stroke-width="0.8" />
<path d="M10,215.5 L16,215.5 L13,221.0 Z" fill="#2a2a2a"/>
<text x="19" y="221" font-size="9.35" fill="#2a2a2a" stroke="#2a2a2a" stroke-width="0.22" text-anchor="start" textLength="56" lengthAdjust="spacingAndGlyphs" >Grease Pencil</text>
<rect x="90.6" y="216.2" width="1.1" height="1.2" fill="#8a8a8a" />
<rect x="90.6" y="218.6" width="1.1" height="1.2" fill="#8a8a8a" />
<rect x="92.8" y="216.2" width="1.1" height="1.2" fill="#8a8a8a" />
<rect x="92.8" y="218.6" width="1.1" height="1.2" fill="#8a8a8a" />
<rect x="95.0" y="216.2" width="1.1" height="1.2" fill="#8a8a8a" />
<rect x="95.0" y="218.6" width="1.1" height="1.2" fill="#8a8a8a" />
<rect x="97.19999999999999" y="216.2" width="1.1" height="1.2" fill="#8a8a8a" />
<rect x="97.19999999999999" y="218.6" width="1.1" height="1.2" fill="#8a8a8a" />
<rect x="107.5" y="212.5" width="9.5" height="180" rx="4.75" fill="#fefefe" stroke="#b4b4b4" stroke-width="1"/>
<path d="M107.5,315 a4.75,4.75 0 0 0 9.5,0" fill="none" stroke="#b4b4b4" stroke-width="1"/>
<text x="12.4" y="244" font-size="8.82" fill="#2a2a2a" stroke="#2a2a2a" stroke-width="0.22" text-anchor="start" textLength="21.93" lengthAdjust="spacingAndGlyphs" >Draw:</text>
<rect x="7.0" y="248.0" width="93.5" height="28.5" fill="#fdfdfd" stroke="#d0e0dc" stroke-width="1" rx="3" />
<line x1="52.5" y1="248" x2="52.5" y2="276.5" stroke="#d8e6e2" stroke-width="1" />
<line x1="7" y1="262.5" x2="100.5" y2="262.5" stroke="#d8e6e2" stroke-width="1" />
<path d="M9.5,260 L11,256 L19,248.5 L21,250.5 L13,258.5 Z" fill="#70a040" stroke="#303030" stroke-width="0.8"/><path d="M18,249.5 L20,251.5" stroke="#d04040" stroke-width="1.6"/>
<text x="25.5" y="259" font-size="8.82" fill="#2a2a2a" stroke="#2a2a2a" stroke-width="0.22" text-anchor="start" textLength="19.6" lengthAdjust="spacingAndGlyphs" >Draw</text>
<path d="M58.5,251 Q61.5,248.5 64,250.5 Q66,252.5 62.5,255.5" stroke="#803020" stroke-width="2.8" fill="none" stroke-linecap="round"/><path d="M58.5,251 Q61.5,248.5 64,250.5 Q66,252.5 62.5,255.5" stroke="#e07050" stroke-width="1.4" fill="none" stroke-linecap="round"/><circle cx="58.8" cy="257.8" r="2.2" fill="#f0f0f0" stroke="#404040" stroke-width="0.9"/>
<text x="72.5" y="259" font-size="8.82" fill="#2a2a2a" stroke="#2a2a2a" stroke-width="0.22" text-anchor="start" textLength="21.94" lengthAdjust="spacingAndGlyphs" >Erase</text>
<path d="M9.5,275 L11,271 L19,263.5 L21,265.5 L13,273.5 Z" fill="#5070c0" stroke="#303030" stroke-width="0.8"/>
<text x="27.2" y="273" font-size="8.82" fill="#2a2a2a" stroke="#2a2a2a" stroke-width="0.22" text-anchor="start" textLength="15.88" lengthAdjust="spacingAndGlyphs" >Line</text>
<path d="M57,265 H67 L62,273.5 Z" fill="#a8a8a8" stroke="#303030" stroke-width="0.9"/><circle cx="57" cy="265" r="1.5" fill="#e0e0e0" stroke="#202020" stroke-width="0.9"/><circle cx="67" cy="265" r="1.5" fill="#e0e0e0" stroke="#202020" stroke-width="0.9"/><circle cx="62" cy="273.5" r="1.5" fill="#e0e0e0" stroke="#202020" stroke-width="0.9"/>
<text x="75" y="273" font-size="8.82" fill="#2a2a2a" stroke="#2a2a2a" stroke-width="0.22" text-anchor="start" textLength="16.34" lengthAdjust="spacingAndGlyphs" >Poly</text>
<rect x="7.0" y="282.5" width="93.5" height="28.5" fill="#fdfdfd" stroke="#d0e0dc" stroke-width="1" rx="3" />
<line x1="7" y1="296.5" x2="100.5" y2="296.5" stroke="#d8e6e2" stroke-width="1" />
<rect x="9.5" y="285.5" width="8" height="9" fill="#f0f0f0" stroke="#303030" stroke-width="0.8"/><circle cx="17.5" cy="285.5" r="1.5" fill="#f0d040"/>
<text x="23.9" y="293.2" font-size="8.82" fill="#2a2a2a" stroke="#2a2a2a" stroke-width="0.22" text-anchor="start" textLength="70.9" lengthAdjust="spacingAndGlyphs" >Insert Blank Frame</text>
<path d="M10,300 L17,307 M17,300 L10,307" stroke="#c8c8c8" stroke-width="2"/>
<text x="28.8" y="307" font-size="8.82" fill="#b0b0b0" stroke="#b0b0b0" stroke-width="0.22" text-anchor="start" textLength="60.2" lengthAdjust="spacingAndGlyphs" >Delete Frame(s)</text>
<text x="24.7" y="323.2" font-size="8.82" fill="#2a2a2a" stroke="#2a2a2a" stroke-width="0.22" text-anchor="start" textLength="64.3" lengthAdjust="spacingAndGlyphs" >Additive Drawing</text>
<text x="24.7" y="337.7" font-size="8.82" fill="#2a2a2a" stroke="#2a2a2a" stroke-width="0.22" text-anchor="start" textLength="73.3" lengthAdjust="spacingAndGlyphs" >Continuous Drawi...</text>
<text x="24.7" y="352.5" font-size="8.82" fill="#2a2a2a" stroke="#2a2a2a" stroke-width="0.22" text-anchor="start" textLength="51.9" lengthAdjust="spacingAndGlyphs" >Draw on Back</text>
<text x="12.6" y="382.2" font-size="8.82" fill="#2a2a2a" stroke="#2a2a2a" stroke-width="0.22" text-anchor="start" textLength="49.02" lengthAdjust="spacingAndGlyphs" >Data Source:</text>
<rect x="7" y="385.5" width="46" height="10" fill="#5680c2" />
<rect x="53" y="385.5" width="47.5" height="11" fill="#fdfdfd" stroke="#e0e0e0" stroke-width="0.8" />
<text x="22.5" y="396.6" font-size="8.82" fill="#58d858" stroke="#58d858" stroke-width="0.12" text-anchor="start" textLength="14.47" lengthAdjust="spacingAndGlyphs" >Clip</text>
<text x="66.3" y="396.6" font-size="8.82" fill="#2a2a2a" stroke="#2a2a2a" stroke-width="0.22" text-anchor="start" textLength="20.69" lengthAdjust="spacingAndGlyphs" >Track</text>
<rect x="0" y="396.5" width="119" height="92" fill="#fcfcfc" />
<rect x="0" y="395" width="119" height="1.2" fill="#e8e8e8" />
<path d="M10.3,403 L16.3,403 L13.3,408.5 Z" fill="#2a2a2a"/>
<text x="18.8" y="408.5" font-size="8.82" fill="#2a2a2a" stroke="#2a2a2a" stroke-width="0.22" text-anchor="start" textLength="82.4" lengthAdjust="spacingAndGlyphs" >New Game Property</text>
<rect x="107.5" y="399.5" width="9.5" height="82" rx="4.75" fill="#fefefe" stroke="#b4b4b4" stroke-width="1"/>
<text x="12.6" y="430.3" font-size="8.82" fill="#909090" stroke="#909090" stroke-width="0.22" text-anchor="start" textLength="18.21" lengthAdjust="spacingAndGlyphs" >Type</text>
<rect x="6.9" y="435.3" width="93.4" height="13.5" fill="#fbfbfb" stroke="#d0d0d0" stroke-width="1" rx="3" />
<text x="12.6" y="445" font-size="8.82" fill="#909090" stroke="#909090" stroke-width="0.22" text-anchor="start" textLength="18.67" lengthAdjust="spacingAndGlyphs" >Float</text>
<path d="M94,440.9 L96,437.3 L98,440.9 Z M94,443.1 L96,446.7 L98,443.1 Z" fill="#a0a0e0"/>
<text x="12.6" y="464" font-size="8.82" fill="#909090" stroke="#909090" stroke-width="0.22" text-anchor="start" textLength="22.41" lengthAdjust="spacingAndGlyphs" >Name</text>
<rect x="6.9" y="469.0" width="93.4" height="13.5" fill="#fdfdfd" stroke="#c8d8d8" stroke-width="1" rx="3" />
<path d="M745.3,215.5 L751.3,215.5 L748.3,221.0 Z" fill="#2a2a2a"/>
<text x="753.9" y="221.1" font-size="9.35" fill="#2a2a2a" stroke="#2a2a2a" stroke-width="0.22" text-anchor="start" textLength="61.3" lengthAdjust="spacingAndGlyphs" >Marker Display</text>
<rect x="839.3" y="216.2" width="1.1" height="1.2" fill="#8a8a8a" />
<rect x="839.3" y="218.6" width="1.1" height="1.2" fill="#8a8a8a" />
<rect x="841.5" y="216.2" width="1.1" height="1.2" fill="#8a8a8a" />
<rect x="841.5" y="218.6" width="1.1" height="1.2" fill="#8a8a8a" />
<rect x="843.6999999999999" y="216.2" width="1.1" height="1.2" fill="#8a8a8a" />
<rect x="843.6999999999999" y="218.6" width="1.1" height="1.2" fill="#8a8a8a" />
<rect x="845.9" y="216.2" width="1.1" height="1.2" fill="#8a8a8a" />
<rect x="845.9" y="218.6" width="1.1" height="1.2" fill="#8a8a8a" />
<path d="M746,238.5 L748.5,241 L753.5,235" stroke="#5a5ac8" stroke-width="1.3" fill="none"/>
<text x="759.6" y="243.7" font-size="8.82" fill="#5ddc5d" stroke="#5ddc5d" stroke-width="0.22" text-anchor="start" textLength="27" lengthAdjust="spacingAndGlyphs" >Pattern</text>
<text x="813.5" y="243.7" font-size="8.82" fill="#2a2a2a" stroke="#2a2a2a" stroke-width="0.22" text-anchor="start" textLength="25.8" lengthAdjust="spacingAndGlyphs" >Search</text>
<path d="M746,253.5 L748.5,256 L753.5,250" stroke="#5a5ac8" stroke-width="1.3" fill="none"/>
<text x="759.6" y="258.5" font-size="8.82" fill="#5ddc5d" stroke="#5ddc5d" stroke-width="0.22" text-anchor="start" textLength="16.2" lengthAdjust="spacingAndGlyphs" >Path</text>
<path d="M803,252.5 L800,255.5 L803,258.5 Z" fill="#6a5fe0"/>
<text x="806.8" y="258.5" font-size="8.82" fill="#2a2a2a" stroke="#2a2a2a" stroke-width="0.22" text-anchor="start" textLength="29.6" lengthAdjust="spacingAndGlyphs" >Len:  20</text>
<path d="M842,252.5 L845,255.5 L842,258.5 Z" fill="#6a5fe0"/>
<path d="M746,272.2 L748.5,274.7 L753.5,268.7" stroke="#5a5ac8" stroke-width="1.3" fill="none"/>
<text x="759.6" y="277" font-size="8.82" fill="#5ddc5d" stroke="#5ddc5d" stroke-width="0.22" text-anchor="start" textLength="32.5" lengthAdjust="spacingAndGlyphs" >Disabled</text>
<text x="813.5" y="277" font-size="8.82" fill="#2a2a2a" stroke="#2a2a2a" stroke-width="0.22" text-anchor="start" textLength="13.2" lengthAdjust="spacingAndGlyphs" >Info</text>
<text x="759.6" y="292.2" font-size="8.82" fill="#2a2a2a" stroke="#2a2a2a" stroke-width="0.22" text-anchor="start" textLength="32" lengthAdjust="spacingAndGlyphs" >3D Mark</text>
<text x="813.5" y="292.2" font-size="8.82" fill="#2a2a2a" stroke="#2a2a2a" stroke-width="0.22" text-anchor="start" textLength="15.7" lengthAdjust="spacingAndGlyphs" >Thin</text>
<rect x="857" y="209" width="165" height="18" fill="#f3f3f3" />
<rect x="862.0" y="212.5" width="22.5" height="13" fill="#ffffff" stroke="#c9c9c9" stroke-width="1" rx="3" />
<g transform="translate(864,214)"><rect x="0" y="0.5" width="11" height="4" rx="2" fill="#404040"/><rect x="0" y="6" width="11" height="4" rx="2" fill="#e8e8e8" stroke="#404040" stroke-width="0.9"/></g>
<path d="M878.5,217.9 L880.5,214.3 L882.5,217.9 Z M878.5,220.1 L880.5,223.7 L882.5,220.1 Z" fill="#6b5fe0"/>
<line x1="906.5" y1="213" x2="906.5" y2="225" stroke="#e8ecec" stroke-width="1" />
<line x1="920.5" y1="213" x2="920.5" y2="225" stroke="#e8ecec" stroke-width="1" />
<line x1="935.5" y1="213" x2="935.5" y2="225" stroke="#e8ecec" stroke-width="1" />
<line x1="950.5" y1="213" x2="950.5" y2="225" stroke="#e8ecec" stroke-width="1" />
<line x1="965" y1="213" x2="965" y2="225" stroke="#e8ecec" stroke-width="1" />
<line x1="980" y1="213" x2="980" y2="225" stroke="#e8ecec" stroke-width="1" />
<line x1="995" y1="213" x2="995" y2="225" stroke="#e8ecec" stroke-width="1" />
<line x1="1010" y1="213" x2="1010" y2="225" stroke="#e8ecec" stroke-width="1" />
<rect x="892.2" y="212.4" width="13.6" height="13" rx="2" fill="#2c4a80" stroke="#5070a0" stroke-width="0.6"/>
<rect x="894" y="215.2" width="10" height="7.8" rx="1" fill="#1a1a1a"/><rect x="895" y="214.3" width="2.5" height="1.2" fill="#c0c8d0"/><circle cx="899" cy="219.2" r="2.6" fill="#2a2a2a" stroke="#d8d0d0" stroke-width="0.8"/><circle cx="899" cy="219.2" r="1.1" fill="#c06070"/>
<g opacity="0.75"><rect x="907.8" y="213.6" width="7.5" height="8" fill="#f4f4f8" stroke="#8a8a98" stroke-width="0.8"/><path d="M910,220 l2,-4 1,3" stroke="#7090c0" stroke-width="0.8" fill="none"/><path d="M916,216.5 h1.8 v8 h-7.5 v-1.8" fill="none" stroke="#8a8a8a" stroke-width="0.9"/></g>
<g opacity="0.7"><circle cx="926" cy="222" r="2.6" fill="#e8e8e8" stroke="#505050" stroke-width="0.8"/><rect x="928" y="214" width="4.2" height="8.2" rx="1.6" fill="#8aa8d8" stroke="#404860" stroke-width="0.8"/><circle cx="925" cy="214.5" r="1" fill="#e8e080"/></g>
<g opacity="0.8"><circle cx="943" cy="219.3" r="5" fill="#b8c8d8" stroke="#8898a8" stroke-width="0.8"/><path d="M940,216 q2,1 1.5,3 q-1,2 0.5,3.5 M945,215.5 q-1,2 1,3 q1,1 0.5,3" stroke="#e8f0f0" stroke-width="1.1" fill="none"/></g>
<g opacity="0.8"><path d="M953.5,216 L958,213.8 L962.8,215.6 L962.8,222.2 L958.3,224.4 L953.5,222.4 Z" fill="#f0d8b0" stroke="#c8a880" stroke-width="0.7"/><path d="M953.5,216 L958.3,218 L962.8,215.6 M958.3,218 V224.4" stroke="#d8b890" stroke-width="0.6" fill="none"/></g>
<g opacity="0.7"><rect x="966.5" y="217.5" width="7.5" height="4.5" rx="2.25" transform="rotate(-35 970.25 219.75)" fill="none" stroke="#808080" stroke-width="1.5"/><rect x="971.5" y="215" width="7.5" height="4.5" rx="2.25" transform="rotate(-35 975.25 217.25)" fill="none" stroke="#808080" stroke-width="1.5"/></g>
<g opacity="0.75"><path d="M984,223.8 L990,217.6" stroke="#8090c8" stroke-width="2.4" stroke-linecap="round"/><path d="M989,214.5 a3,3 0 1 0 3.5,3.5 l-2,0.2 -1.5,-1.7 z" fill="#8090c8"/></g>
<g opacity="0.8"><path d="M998.5,215.2 L1007.2,215.2 L1002.8,222.8 Z" fill="#e8e8e8" stroke="#808080" stroke-width="1"/><circle cx="998.5" cy="215.2" r="1.6" fill="#fff" stroke="#505050" stroke-width="0.9"/><circle cx="1007.2" cy="215.2" r="1.6" fill="#fff" stroke="#505050" stroke-width="0.9"/><circle cx="1002.8" cy="222.8" r="1.8" fill="#fff" stroke="#505050" stroke-width="0.9"/></g>
<g opacity="0.8"><circle cx="1017.5" cy="219.5" r="4.8" fill="#e0c8c8" stroke="#a09090" stroke-width="0.8"/><path d="M1017.5,214.7 V224.3 M1012.7,219.5 H1022.3" stroke="#f4ecec" stroke-width="1"/></g>
<line x1="1012.0" y1="209" x2="1022" y2="219.0" stroke="#505050" stroke-width="0.8" />
<line x1="1015.2" y1="209" x2="1022" y2="215.8" stroke="#505050" stroke-width="0.8" />
<line x1="1018.4" y1="209" x2="1022" y2="212.6" stroke="#505050" stroke-width="0.8" />
<rect x="857" y="227" width="165" height="1" fill="#e4e4e4" />
<path d="M863.8,246.6 L867.6,242.8" stroke="#404040" stroke-width="1.1"/><path d="M865.8,240.2 L870.8,245.2 L871.4,242 L874.6,238.8 L872.2,236.4 L869,239.6 Z" fill="#d8d8d8" stroke="#404040" stroke-width="0.9"/>
<circle cx="882" cy="244" r="2.6" fill="#e0e0e0" stroke="#303030" stroke-width="0.8"/><rect x="884" y="236.5" width="4" height="8" rx="1.5" fill="#5b7fb8" stroke="#303030" stroke-width="0.8"/><circle cx="880.5" cy="237" r="1.1" fill="#f0e060"/>
<text x="894.6" y="245.1" font-size="8.82" fill="#2a2a2a" stroke="#2a2a2a" stroke-width="0.22" text-anchor="start" textLength="22.3" lengthAdjust="spacingAndGlyphs" >Scene</text>
<rect x="859" y="254" width="148" height="1" fill="#a8a8a8"/>
<path d="M865.2,261.5 L871.2,261.5 L868.2,267.0 Z" fill="#2a2a2a"/>
<text x="874.8" y="266.6" font-size="9.35" fill="#2a2a2a" stroke="#2a2a2a" stroke-width="0.22" text-anchor="start" textLength="29.7" lengthAdjust="spacingAndGlyphs" >Render</text>
<rect x="994.5" y="263.59999999999997" width="1.1" height="1.2" fill="#8a8a8a" />
<rect x="994.5" y="266.0" width="1.1" height="1.2" fill="#8a8a8a" />
<rect x="996.7" y="263.59999999999997" width="1.1" height="1.2" fill="#8a8a8a" />
<rect x="996.7" y="266.0" width="1.1" height="1.2" fill="#8a8a8a" />
<rect x="998.9" y="263.59999999999997" width="1.1" height="1.2" fill="#8a8a8a" />
<rect x="998.9" y="266.0" width="1.1" height="1.2" fill="#8a8a8a" />
<rect x="1001.1" y="263.59999999999997" width="1.1" height="1.2" fill="#8a8a8a" />
<rect x="1001.1" y="266.0" width="1.1" height="1.2" fill="#8a8a8a" />
<rect x="1010.5" y="232.5" width="9" height="268" rx="4.5" fill="#fdfdfd" stroke="#a8a8a8" stroke-width="1"/>
<path d="M1010.5,354 a4.5,4.5 0 0 0 9,0" fill="none" stroke="#a8a8a8" stroke-width="1"/>
<rect x="862.0" y="280.5" width="142" height="12.5" fill="#fcfcfc" stroke="#d0e0dc" stroke-width="1" rx="3" />
<line x1="908.6" y1="280.5" x2="908.6" y2="293" stroke="#d8e6e2" stroke-width="1" />
<line x1="956.5" y1="280.5" x2="956.5" y2="293" stroke="#d8e6e2" stroke-width="1" />
<rect x="864" y="283.5" width="11.5" height="8.5" rx="1.5" fill="#4a4a4a" stroke="#202020" stroke-width="0.6"/><rect x="865.5" y="282.3" width="3" height="1.5" fill="#404040"/><circle cx="869.8" cy="287.8" r="2.6" fill="#303030" stroke="#c8c8c8" stroke-width="0.8"/><circle cx="869.8" cy="287.8" r="1" fill="#a05050"/><path d="M875,280.3 l0.7,1.5 1.5,0.3 -1.1,1 0.3,1.6 -1.4,-0.8 -1.4,0.8 0.3,-1.6 -1.1,-1 1.5,-0.3 z" fill="#f0e040"/>
<text x="877.3" y="289.9" font-size="8.82" fill="#2a2a2a" stroke="#2a2a2a" stroke-width="0.22" text-anchor="start" textLength="25.6" lengthAdjust="spacingAndGlyphs" >Render</text>
<g transform="translate(910.5,280.2)"><path d="M0.2,4.6 L10.6,1.2 L11.3,3.4 L0.9,6.8 Z" fill="#202228"/><path d="M2.6,3.9 L4.2,5.8 M5.6,2.9 L7.2,4.8 M8.6,1.9 L10.2,3.8" stroke="#d8dce0" stroke-width="0.9"/><rect x="1.2" y="5.4" width="9.8" height="6.8" fill="#1c1c20"/><path d="M2.2,7.2 h1.6 M5,7.2 h1.6 M7.8,7.2 h1.6" stroke="#e8e8e8" stroke-width="1"/><rect x="2" y="9.2" width="8.2" height="2.2" fill="#4a4a50"/><path d="M1.2,3.5 a1.6,2.6 0 0 0 0,4.6" stroke="#4a6a98" stroke-width="1.1" fill="none"/></g>
<text x="922.7" y="289.9" font-size="8.82" fill="#2a2a2a" stroke="#2a2a2a" stroke-width="0.22" text-anchor="start" textLength="32.1" lengthAdjust="spacingAndGlyphs" >Animatio</text>
<path d="M960,284 h3 l3,-2.5 v10 l-3,-2.5 h-3 z" fill="#e8e8e8" stroke="#404040" stroke-width="0.8"/><ellipse cx="969.5" cy="287" rx="1.5" ry="4" fill="#a0b0e0" stroke="#6070a0" stroke-width="0.6"/>
<text x="975.5" y="289.9" font-size="8.82" fill="#2a2a2a" stroke="#2a2a2a" stroke-width="0.22" text-anchor="start" textLength="20.6" lengthAdjust="spacingAndGlyphs" >Audio</text>
<text x="867.4" y="308.8" font-size="8.82" fill="#2a2a2a" stroke="#2a2a2a" stroke-width="0.22" text-anchor="start" textLength="29.7" lengthAdjust="spacingAndGlyphs" >Display:</text>
<rect x="912.9" y="298.9" width="91" height="13.2" fill="#ffffff" stroke="#c9c9c9" stroke-width="1" rx="3" />
<line x1="989.5" y1="299" x2="989.5" y2="312" stroke="#d6e2e0" stroke-width="1" />
<text x="918.5" y="308.8" font-size="8.82" fill="#2a2a2a" stroke="#2a2a2a" stroke-width="0.22" text-anchor="start" textLength="46.7" lengthAdjust="spacingAndGlyphs" >Image Editor</text>
<path d="M982.5,304.4 L984.5,300.8 L986.5,304.4 Z M982.5,306.6 L984.5,310.2 L986.5,306.6 Z" fill="#6b5fe0"/>
<rect x="994.5" y="305.5" width="8.5" height="6" rx="0.8" fill="#e8e8e8" stroke="#404040" stroke-width="0.9"/><rect x="997.8" y="307.6" width="2" height="1.6" fill="#404040"/><path d="M993,304.5 v-2 a2.5,2.5 0 0 1 5,0 v0.8" stroke="#404040" stroke-width="0.9" fill="none"/>
<rect x="859" y="318" width="148" height="1" fill="#a8a8a8"/>
<path d="M865.2,325.2 L871.2,325.2 L868.2,330.7 Z" fill="#2a2a2a"/>
<text x="874.8" y="330.3" font-size="9.35" fill="#2a2a2a" stroke="#2a2a2a" stroke-width="0.22" text-anchor="start" textLength="48.2" lengthAdjust="spacingAndGlyphs" >Dimensions</text>
<rect x="994.5" y="327.2" width="1.1" height="1.2" fill="#8a8a8a" />
<rect x="994.5" y="329.6" width="1.1" height="1.2" fill="#8a8a8a" />
<rect x="996.7" y="327.2" width="1.1" height="1.2" fill="#8a8a8a" />
<rect x="996.7" y="329.6" width="1.1" height="1.2" fill="#8a8a8a" />
<rect x="998.9" y="327.2" width="1.1" height="1.2" fill="#8a8a8a" />
<rect x="998.9" y="329.6" width="1.1" height="1.2" fill="#8a8a8a" />
<rect x="1001.1" y="327.2" width="1.1" height="1.2" fill="#8a8a8a" />
<rect x="1001.1" y="329.6" width="1.1" height="1.2" fill="#8a8a8a" />
<rect x="862.0" y="343.2" width="142" height="13.8" fill="#ffffff" stroke="#c9c9c9" stroke-width="1" rx="3" />
<line x1="974.7" y1="343.2" x2="974.7" y2="357" stroke="#d6e2e0" stroke-width="1" />
<line x1="989.5" y1="343.2" x2="989.5" y2="357" stroke="#d6e2e0" stroke-width="1" />
<text x="867.9" y="353.5" font-size="8.82" fill="#2a2a2a" stroke="#2a2a2a" stroke-width="0.22" text-anchor="start" textLength="54.8" lengthAdjust="spacingAndGlyphs" >Render Presets</text>
<path d="M968,348.9 L970,345.3 L972,348.9 Z M968,351.1 L970,354.7 L972,351.1 Z" fill="#6b5fe0"/>
<path d="M980.5,346 h3 v3 h3 v3 h-3 v3 h-3 v-3 h-3 v-3 h3 z" fill="#f4f4f4" stroke="#505050" stroke-width="0.9"/>
<rect x="992" y="348.5" width="10" height="3" rx="1" fill="#e8e8e8" stroke="#505050" stroke-width="0.9"/>
<text x="867.9" y="372.5" font-size="8.82" fill="#2a2a2a" stroke="#2a2a2a" stroke-width="0.22" text-anchor="start" textLength="40.7" lengthAdjust="spacingAndGlyphs" >Resolution:</text>
<text x="941.6" y="372.5" font-size="8.82" fill="#2a2a2a" stroke="#2a2a2a" stroke-width="0.22" text-anchor="start" textLength="51.2" lengthAdjust="spacingAndGlyphs" >Frame Range:</text>
<path d="M869.5,381.5 L866.5,384.5 L869.5,387.5 Z" fill="#6a5fe0"/>
<text x="874" y="387.7" font-size="8.82" fill="#2a2a2a" stroke="#2a2a2a" stroke-width="0.22" text-anchor="start" textLength="42.9" lengthAdjust="spacingAndGlyphs" >X:  1920 px</text>
<path d="M922.5,381.5 L925.5,384.5 L922.5,387.5 Z" fill="#6a5fe0"/>
<path d="M943.5,381.5 L940.5,384.5 L943.5,387.5 Z" fill="#6a5fe0"/>
<text x="947.8" y="387.7" font-size="8.82" fill="#2a2a2a" stroke="#2a2a2a" stroke-width="0.22" text-anchor="start" textLength="34.2" lengthAdjust="spacingAndGlyphs" >Start Fra:</text>
<text x="992" y="387.7" font-size="8.82" fill="#2a2a2a" stroke="#2a2a2a" stroke-width="0.22" text-anchor="end" textLength="4.67" lengthAdjust="spacingAndGlyphs" >1</text>
<path d="M997.5,381.5 L1000.5,384.5 L997.5,387.5 Z" fill="#6a5fe0"/>
<path d="M869.5,395.5 L866.5,398.5 L869.5,401.5 Z" fill="#6a5fe0"/>
<text x="874" y="401.7" font-size="8.82" fill="#2a2a2a" stroke="#2a2a2a" stroke-width="0.22" text-anchor="start" textLength="42.9" lengthAdjust="spacingAndGlyphs" >Y:  1080 px</text>
<path d="M922.5,395.5 L925.5,398.5 L922.5,401.5 Z" fill="#6a5fe0"/>
<path d="M943.5,395.5 L940.5,398.5 L943.5,401.5 Z" fill="#6a5fe0"/>
<text x="947.8" y="401.7" font-size="8.82" fill="#2a2a2a" stroke="#2a2a2a" stroke-width="0.22" text-anchor="start" textLength="27.54" lengthAdjust="spacingAndGlyphs" >End Fr:</text>
<text x="992.3" y="401.7" font-size="8.82" fill="#2a2a2a" stroke="#2a2a2a" stroke-width="0.22" text-anchor="end" textLength="14.01" lengthAdjust="spacingAndGlyphs" >250</text>
<path d="M997.5,395.5 L1000.5,398.5 L997.5,401.5 Z" fill="#6a5fe0"/>
<path d="M862,406.2 H898.2 V419.9 H866 Q862,419.9 862,415.9 Z" fill="#2ec36b"/>
<text x="899.9" y="416.6" font-size="8.82" fill="#2a2a2a" stroke="#2a2a2a" stroke-width="0.22" text-anchor="start" textLength="17.8" lengthAdjust="spacingAndGlyphs" >50%</text>
<path d="M943.5,410.5 L940.5,413.5 L943.5,416.5 Z" fill="#6a5fe0"/>
<text x="947.8" y="416.6" font-size="8.82" fill="#2a2a2a" stroke="#2a2a2a" stroke-width="0.22" text-anchor="start" textLength="36.87" lengthAdjust="spacingAndGlyphs" >Frame St:</text>
<text x="992" y="416.6" font-size="8.82" fill="#2a2a2a" stroke="#2a2a2a" stroke-width="0.22" text-anchor="end" textLength="4.67" lengthAdjust="spacingAndGlyphs" >1</text>
<path d="M997.5,410.5 L1000.5,413.5 L997.5,416.5 Z" fill="#6a5fe0"/>
<text x="867.9" y="432.4" font-size="8.82" fill="#2a2a2a" stroke="#2a2a2a" stroke-width="0.22" text-anchor="start" textLength="49" lengthAdjust="spacingAndGlyphs" >Aspect Ratio:</text>
<text x="941.6" y="432.4" font-size="8.82" fill="#2a2a2a" stroke="#2a2a2a" stroke-width="0.22" text-anchor="start" textLength="45.4" lengthAdjust="spacingAndGlyphs" >Frame Rate:</text>
<path d="M869.5,441 L866.5,444 L869.5,447 Z" fill="#6a5fe0"/>
<text x="874" y="447.2" font-size="8.82" fill="#2a2a2a" stroke="#2a2a2a" stroke-width="0.22" text-anchor="start" textLength="7.94" lengthAdjust="spacingAndGlyphs" >X:</text>
<text x="917.4" y="447.2" font-size="8.82" fill="#2a2a2a" stroke="#2a2a2a" stroke-width="0.22" text-anchor="end" textLength="21.02" lengthAdjust="spacingAndGlyphs" >1.000</text>
<path d="M922.5,441 L925.5,444 L922.5,447 Z" fill="#6a5fe0"/>
<rect x="936.0" y="437.0" width="68" height="13" fill="#ffffff" stroke="#c9c9c9" stroke-width="1" rx="3" />
<text x="941.6" y="447" font-size="8.82" fill="#2a2a2a" stroke="#2a2a2a" stroke-width="0.22" text-anchor="start" textLength="23.2" lengthAdjust="spacingAndGlyphs" >24 fps</text>
<path d="M997.5,442.4 L999.5,438.8 L1001.5,442.4 Z M997.5,444.6 L999.5,448.2 L1001.5,444.6 Z" fill="#6b5fe0"/>
<path d="M869.5,455 L866.5,458 L869.5,461 Z" fill="#6a5fe0"/>
<text x="874" y="461.3" font-size="8.82" fill="#2a2a2a" stroke="#2a2a2a" stroke-width="0.22" text-anchor="start" textLength="7.47" lengthAdjust="spacingAndGlyphs" >Y:</text>
<text x="917.4" y="461.3" font-size="8.82" fill="#2a2a2a" stroke="#2a2a2a" stroke-width="0.22" text-anchor="end" textLength="21.02" lengthAdjust="spacingAndGlyphs" >1.000</text>
<path d="M922.5,455 L925.5,458 L922.5,461 Z" fill="#6a5fe0"/>
<text x="941.6" y="461.3" font-size="8.82" fill="#2a2a2a" stroke="#2a2a2a" stroke-width="0.22" text-anchor="start" textLength="61.6" lengthAdjust="spacingAndGlyphs" >Time Remappi...</text>
<text x="880.6" y="478.6" font-size="8.82" fill="#2a2a2a" stroke="#2a2a2a" stroke-width="0.22" text-anchor="start" textLength="9.4" lengthAdjust="spacingAndGlyphs" >Bo</text>
<text x="916.9" y="478.6" font-size="8.82" fill="#b0b0b0" stroke="#b0b0b0" stroke-width="0.22" text-anchor="start" textLength="8.2" lengthAdjust="spacingAndGlyphs" >Cr</text>
<path d="M943.5,471 L940.5,474 L943.5,477 Z" fill="#6a5fe0"/>
<text x="947.8" y="477" font-size="8.82" fill="#2a2a2a" stroke="#2a2a2a" stroke-width="0.22" text-anchor="start" textLength="10.4" lengthAdjust="spacingAndGlyphs" >10</text>
<path d="M963,471 L966,474 L963,477 Z" fill="#6a5fe0"/>
<path d="M977,471 L974,474 L977,477 Z" fill="#6a5fe0"/>
<text x="982" y="477" font-size="8.82" fill="#2a2a2a" stroke="#2a2a2a" stroke-width="0.22" text-anchor="start" textLength="10.3" lengthAdjust="spacingAndGlyphs" >10</text>
<path d="M997.5,471 L1000.5,474 L997.5,477 Z" fill="#6a5fe0"/>
<rect x="859" y="487.5" width="148" height="1" fill="#a8a8a8"/>
<path d="M865.2,494.5 L871.2,494.5 L868.2,500.0 Z" fill="#2a2a2a"/>
<path d="M876.5,496.0 L879.0,498.5 L884.0,492.5" stroke="#5a5ac8" stroke-width="1.3" fill="none"/>
<text x="889.7" y="500" font-size="9.35" fill="#2a2a2a" stroke="#2a2a2a" stroke-width="0.22" text-anchor="start" textLength="51.9" lengthAdjust="spacingAndGlyphs" >Anti-Aliasing</text>
<rect x="994.5" y="497.2" width="1.1" height="1.2" fill="#8a8a8a" />
<rect x="994.5" y="499.6" width="1.1" height="1.2" fill="#8a8a8a" />
<rect x="996.7" y="497.2" width="1.1" height="1.2" fill="#8a8a8a" />
<rect x="996.7" y="499.6" width="1.1" height="1.2" fill="#8a8a8a" />
<rect x="998.9" y="497.2" width="1.1" height="1.2" fill="#8a8a8a" />
<rect x="998.9" y="499.6" width="1.1" height="1.2" fill="#8a8a8a" />
<rect x="1001.1" y="497.2" width="1.1" height="1.2" fill="#8a8a8a" />
<rect x="1001.1" y="499.6" width="1.1" height="1.2" fill="#8a8a8a" />
<line x1="857" y1="495.0" x2="867.0" y2="505" stroke="#505050" stroke-width="0.8" />
<line x1="857" y1="498.2" x2="863.8" y2="505" stroke="#505050" stroke-width="0.8" />
<line x1="857" y1="501.4" x2="860.6" y2="505" stroke="#505050" stroke-width="0.8" />
<rect x="0" y="484.5" width="855" height="20.5" fill="#f3f3f3" />
<rect x="0" y="484.5" width="855" height="0.8" fill="#e8e8e8" />
<line x1="0" y1="495.0" x2="10.0" y2="505" stroke="#505050" stroke-width="0.8" />
<line x1="0" y1="498.2" x2="6.8" y2="505" stroke="#505050" stroke-width="0.8" />
<line x1="0" y1="501.4" x2="3.5999999999999996" y2="505" stroke="#505050" stroke-width="0.8" />
<rect x="7.1" y="488.5" width="22" height="14" fill="#ffffff" stroke="#c9c9c9" stroke-width="1" rx="3" />
<g transform="translate(9,489.6)"><path d="M0.2,4.6 L10.6,1.2 L11.3,3.4 L0.9,6.8 Z" fill="#202228"/><path d="M2.6,3.9 L4.2,5.8 M5.6,2.9 L7.2,4.8 M8.6,1.9 L10.2,3.8" stroke="#d8dce0" stroke-width="0.9"/><rect x="1.2" y="5.4" width="9.8" height="6.8" fill="#1c1c20"/><path d="M2.2,7.2 h1.6 M5,7.2 h1.6 M7.8,7.2 h1.6" stroke="#e8e8e8" stroke-width="1"/><rect x="2" y="9.2" width="8.2" height="2.2" fill="#4a4a50"/><path d="M1.2,3.5 a1.6,2.6 0 0 0 0,4.6" stroke="#4a6a98" stroke-width="1.1" fill="none"/></g>
<path d="M23.5,494.7 L25.5,491.1 L27.5,494.7 Z M23.5,496.90000000000003 L25.5,500.5 L27.5,496.90000000000003 Z" fill="#6b5fe0"/>
<text x="39" y="499.3" font-size="8.82" fill="#2a2a2a" stroke="#2a2a2a" stroke-width="0.22" text-anchor="start" textLength="18.05" lengthAdjust="spacingAndGlyphs" >View</text>
<text x="72.5" y="499.3" font-size="8.82" fill="#2a2a2a" stroke="#2a2a2a" stroke-width="0.22" text-anchor="start" textLength="14.47" lengthAdjust="spacingAndGlyphs" >Clip</text>
<rect x="97.5" y="488.5" width="112" height="14" fill="#ffffff" stroke="#c9c9c9" stroke-width="1" rx="3" />
<line x1="120.7" y1="488.5" x2="120.7" y2="502.5" stroke="#d6e2e0" stroke-width="1" />
<g transform="translate(100.2,490)"><rect x="4.7" y="0" width="7.2" height="6.1" rx="0.8" fill="#30343c"/><path d="M6,1.2 v1 M6,3.6 v1 M10.6,1.2 v1 M10.6,3.6 v1" stroke="#b8c0c8" stroke-width="0.8"/><rect x="0" y="4.9" width="9.2" height="6.4" rx="0.8" fill="#50607a"/><rect x="0.8" y="5.7" width="7.6" height="1.2" fill="#8aa0c8"/><path d="M1.4,8.4 h1.2 M3.9,8.4 h1.2 M6.4,8.4 h1.2" stroke="#f0f4ff" stroke-width="1.3"/></g>
<path d="M114.3,494.7 L116.3,491.1 L118.3,494.7 Z M114.3,496.90000000000003 L116.3,500.5 L118.3,496.90000000000003 Z" fill="#6b5fe0"/>
<g transform="translate(123.6,490.3)"><rect x="0" y="1" width="11.5" height="8.8" rx="1.2" fill="#8a8670" stroke="#3a3828" stroke-width="0.8"/><rect x="5.5" y="0" width="3.6" height="6" fill="#f4f4f0" stroke="#505040" stroke-width="0.6"/><rect x="9.6" y="0.4" width="1.4" height="5.4" fill="#303028"/><rect x="2.2" y="0.6" width="1.4" height="5.4" fill="#e8e4d8"/><path d="M0.2,5.6 H11.6 V9.2 a0.8,0.8 0 0 1 -0.8,0.8 H1 a0.8,0.8 0 0 1 -0.8,-0.8 Z" fill="#ddd5a8" stroke="#4a4630" stroke-width="0.7"/></g>
<text x="171" y="499.3" font-size="8.82" fill="#2a2a2a" stroke="#2a2a2a" stroke-width="0.22" text-anchor="middle" textLength="20.55" lengthAdjust="spacingAndGlyphs" >Open</text>
<rect x="215.0" y="488.7" width="43.5" height="14" rx="3" fill="#fafafa" stroke="#e0e6e4" stroke-width="1"/>
<line x1="229.0" y1="489.2" x2="229.0" y2="502.2" stroke="#e4ecea"/><line x1="243.7" y1="489.2" x2="243.7" y2="502.2" stroke="#e4ecea"/>
<path d="M217.5,488.2 h11.5 v15 h-11.5 a3,3 0 0 1 -3,-3 v-9 a3,3 0 0 1 3,-3 z" fill="#4a72b8"/>
<g transform="translate(216.5,490.7)"><rect x="4.7" y="0" width="7" height="6" rx="0.8" fill="#101830"/><path d="M6,1.2 v1 M6,3.6 v1 M10.4,1.2 v1" stroke="#c8d0e0" stroke-width="0.8"/><rect x="0" y="4.8" width="9" height="6.2" rx="0.8" fill="#182848"/><path d="M1.4,8 h1.2 M3.9,8 h1.2 M6.4,8 h1.2" stroke="#f0f4ff" stroke-width="1.4"/></g>
<g transform="translate(230.0,490.2)" opacity="0.5"><path d="M1,6.5 H6 Q8,6.5 8.5,4 Q9,1.5 11.5,1.5" stroke="#a0a0a0" stroke-width="1.1" fill="none"/><path d="M1,3 Q3,3 4,5" stroke="#909090" stroke-width="1.2" fill="none"/><path d="M5,10 Q8,12 11.5,9" stroke="#90c090" stroke-width="1.4" fill="none"/></g>
<g transform="translate(244.5,490.2)" opacity="0.6"><path d="M0.8999999999999999,4.5 L3.5,1.9 L6.1,4.5 L3.5,7.1 Z" fill="none" stroke="#808080" stroke-width="0.8"/><path d="M7.4,4.5 L10,1.9 L12.6,4.5 L10,7.1 Z" fill="#f0d8c0" stroke="#c0a080" stroke-width="0.8"/><path d="M4.199999999999999,10.5 L6.8,7.9 L9.4,10.5 L6.8,13.1 Z" fill="none" stroke="#808080" stroke-width="0.8"/></g>
<rect x="0" y="504.6" width="1022" height="1.4" fill="#3a3a3a" />
<rect x="0" y="506" width="1022" height="6" fill="#ffffff" />
<rect x="0" y="506" width="176" height="6" fill="#9a9a9a" />
<rect x="924" y="506" width="98" height="6" fill="#9a9a9a" />
<rect x="8.699999999999989" y="506" width="1" height="6" fill="#3a9a3a" />
<rect x="23.69999999999999" y="506" width="1" height="6" fill="#3a9a3a" />
<rect x="38.69999999999999" y="506" width="1" height="6" fill="#3a9a3a" />
<rect x="53.69999999999999" y="506" width="1" height="6" fill="#3a9a3a" />
<rect x="68.69999999999999" y="506" width="1" height="6" fill="#3a9a3a" />
<rect x="83.69999999999999" y="506" width="1" height="6" fill="#3a9a3a" />
<rect x="98.69999999999999" y="506" width="1" height="6" fill="#3a9a3a" />
<rect x="113.69999999999999" y="506" width="1" height="6" fill="#3a9a3a" />
<rect x="128.7" y="506" width="1" height="6" fill="#3a9a3a" />
<rect x="143.7" y="506" width="1" height="6" fill="#3a9a3a" />
<rect x="158.7" y="506" width="1" height="6" fill="#3a9a3a" />
<rect x="173.7" y="506" width="1" height="6" fill="#3a9a3a" />
<rect x="188.7" y="506" width="1" height="6" fill="#7ee07e" />
<rect x="203.7" y="506" width="1" height="6" fill="#7ee07e" />
<rect x="218.7" y="506" width="1" height="6" fill="#7ee07e" />
<rect x="233.7" y="506" width="1" height="6" fill="#7ee07e" />
<rect x="248.7" y="506" width="1" height="6" fill="#7ee07e" />
<rect x="263.7" y="506" width="1" height="6" fill="#7ee07e" />
<rect x="278.7" y="506" width="1" height="6" fill="#7ee07e" />
<rect x="293.7" y="506" width="1" height="6" fill="#7ee07e" />
<rect x="308.7" y="506" width="1" height="6" fill="#7ee07e" />
<rect x="323.7" y="506" width="1" height="6" fill="#7ee07e" />
<rect x="338.7" y="506" width="1" height="6" fill="#7ee07e" />
<rect x="353.7" y="506" width="1" height="6" fill="#7ee07e" />
<rect x="368.7" y="506" width="1" height="6" fill="#7ee07e" />
<rect x="383.7" y="506" width="1" height="6" fill="#7ee07e" />
<rect x="398.7" y="506" width="1" height="6" fill="#7ee07e" />
<rect x="413.7" y="506" width="1" height="6" fill="#7ee07e" />
<rect x="428.7" y="506" width="1" height="6" fill="#7ee07e" />
<rect x="443.7" y="506" width="1" height="6" fill="#7ee07e" />
<rect x="458.7" y="506" width="1" height="6" fill="#7ee07e" />
<rect x="473.7" y="506" width="1" height="6" fill="#7ee07e" />
<rect x="488.7" y="506" width="1" height="6" fill="#7ee07e" />
<rect x="503.7" y="506" width="1" height="6" fill="#7ee07e" />
<rect x="518.7" y="506" width="1" height="6" fill="#7ee07e" />
<rect x="533.7" y="506" width="1" height="6" fill="#7ee07e" />
<rect x="548.7" y="506" width="1" height="6" fill="#7ee07e" />
<rect x="563.7" y="506" width="1" height="6" fill="#7ee07e" />
<rect x="578.7" y="506" width="1" height="6" fill="#7ee07e" />
<rect x="593.7" y="506" width="1" height="6" fill="#7ee07e" />
<rect x="608.7" y="506" width="1" height="6" fill="#7ee07e" />
<rect x="623.7" y="506" width="1" height="6" fill="#7ee07e" />
<rect x="638.7" y="506" width="1" height="6" fill="#7ee07e" />
<rect x="653.7" y="506" width="1" height="6" fill="#7ee07e" />
<rect x="668.7" y="506" width="1" height="6" fill="#7ee07e" />
<rect x="683.7" y="506" width="1" height="6" fill="#7ee07e" />
<rect x="698.7" y="506" width="1" height="6" fill="#7ee07e" />
<rect x="713.7" y="506" width="1" height="6" fill="#7ee07e" />
<rect x="728.7" y="506" width="1" height="6" fill="#7ee07e" />
<rect x="743.7" y="506" width="1" height="6" fill="#7ee07e" />
<rect x="758.7" y="506" width="1" height="6" fill="#7ee07e" />
<rect x="773.7" y="506" width="1" height="6" fill="#7ee07e" />
<rect x="788.7" y="506" width="1" height="6" fill="#7ee07e" />
<rect x="803.7" y="506" width="1" height="6" fill="#7ee07e" />
<rect x="818.7" y="506" width="1" height="6" fill="#7ee07e" />
<rect x="833.7" y="506" width="1" height="6" fill="#7ee07e" />
<rect x="848.7" y="506" width="1" height="6" fill="#7ee07e" />
<rect x="863.7" y="506" width="1" height="6" fill="#7ee07e" />
<rect x="878.7" y="506" width="1" height="6" fill="#7ee07e" />
<rect x="893.7" y="506" width="1" height="6" fill="#7ee07e" />
<rect x="908.7" y="506" width="1" height="6" fill="#7ee07e" />
<rect x="923.7" y="506" width="1" height="6" fill="#3a9a3a" />
<rect x="938.7" y="506" width="1" height="6" fill="#3a9a3a" />
<rect x="953.7" y="506" width="1" height="6" fill="#3a9a3a" />
<rect x="968.7" y="506" width="1" height="6" fill="#3a9a3a" />
<rect x="983.7" y="506" width="1" height="6" fill="#3a9a3a" />
<rect x="998.7" y="506" width="1" height="6" fill="#3a9a3a" />
<rect x="1013.7" y="506" width="1" height="6" fill="#3a9a3a" />
<rect x="176" y="506" width="2.2" height="6" fill="#1a1ae0" />
<rect x="0" y="511.6" width="1022" height="0.8" fill="#c8c8c8" />
<rect x="0" y="512" width="1022" height="11" fill="#f6f6f6" />
<rect x="2.5" y="513" width="1016" height="8.5" rx="4.25" fill="#fbfbfb" stroke="#c4c4c4" stroke-width="1"/>
<circle cx="7" cy="517.2" r="2.9" fill="#d9d9d9"/><circle cx="1013.5" cy="517.2" r="2.9" fill="#d9d9d9"/>
<text x="23.9" y="520.8" font-size="8.82" fill="#202020" stroke="#202020" stroke-width="0.22" text-anchor="middle" textLength="12.14" lengthAdjust="spacingAndGlyphs" >-50</text>
<text x="53.66000000000002" y="520.8" font-size="8.82" fill="#202020" stroke="#202020" stroke-width="0.22" text-anchor="middle" textLength="12.14" lengthAdjust="spacingAndGlyphs" >-40</text>
<text x="83.42000000000002" y="520.8" font-size="8.82" fill="#202020" stroke="#202020" stroke-width="0.22" text-anchor="middle" textLength="12.14" lengthAdjust="spacingAndGlyphs" >-30</text>
<text x="113.18000000000002" y="520.8" font-size="8.82" fill="#202020" stroke="#202020" stroke-width="0.22" text-anchor="middle" textLength="12.14" lengthAdjust="spacingAndGlyphs" >-20</text>
<text x="142.94000000000003" y="520.8" font-size="8.82" fill="#202020" stroke="#202020" stroke-width="0.22" text-anchor="middle" textLength="12.14" lengthAdjust="spacingAndGlyphs" >-10</text>
<text x="175.60000000000002" y="520.8" font-size="8.82" fill="#202020" stroke="#202020" stroke-width="0.22" text-anchor="middle" textLength="4.67" lengthAdjust="spacingAndGlyphs" >0</text>
<text x="204.76" y="520.8" font-size="8.82" fill="#202020" stroke="#202020" stroke-width="0.22" text-anchor="middle" textLength="9.34" lengthAdjust="spacingAndGlyphs" >10</text>
<text x="234.51999999999998" y="520.8" font-size="8.82" fill="#202020" stroke="#202020" stroke-width="0.22" text-anchor="middle" textLength="9.34" lengthAdjust="spacingAndGlyphs" >20</text>
<text x="264.28000000000003" y="520.8" font-size="8.82" fill="#202020" stroke="#202020" stroke-width="0.22" text-anchor="middle" textLength="9.34" lengthAdjust="spacingAndGlyphs" >30</text>
<text x="294.04" y="520.8" font-size="8.82" fill="#202020" stroke="#202020" stroke-width="0.22" text-anchor="middle" textLength="9.34" lengthAdjust="spacingAndGlyphs" >40</text>
<text x="323.8" y="520.8" font-size="8.82" fill="#202020" stroke="#202020" stroke-width="0.22" text-anchor="middle" textLength="9.34" lengthAdjust="spacingAndGlyphs" >50</text>
<text x="353.56" y="520.8" font-size="8.82" fill="#202020" stroke="#202020" stroke-width="0.22" text-anchor="middle" textLength="9.34" lengthAdjust="spacingAndGlyphs" >60</text>
<text x="383.32" y="520.8" font-size="8.82" fill="#202020" stroke="#202020" stroke-width="0.22" text-anchor="middle" textLength="9.34" lengthAdjust="spacingAndGlyphs" >70</text>
<text x="413.08" y="520.8" font-size="8.82" fill="#202020" stroke="#202020" stroke-width="0.22" text-anchor="middle" textLength="9.34" lengthAdjust="spacingAndGlyphs" >80</text>
<text x="442.84" y="520.8" font-size="8.82" fill="#202020" stroke="#202020" stroke-width="0.22" text-anchor="middle" textLength="9.34" lengthAdjust="spacingAndGlyphs" >90</text>
<text x="472.6" y="520.8" font-size="8.82" fill="#202020" stroke="#202020" stroke-width="0.22" text-anchor="middle" textLength="14.01" lengthAdjust="spacingAndGlyphs" >100</text>
<text x="502.36" y="520.8" font-size="8.82" fill="#202020" stroke="#202020" stroke-width="0.22" text-anchor="middle" textLength="13.39" lengthAdjust="spacingAndGlyphs" >110</text>
<text x="532.1200000000001" y="520.8" font-size="8.82" fill="#202020" stroke="#202020" stroke-width="0.22" text-anchor="middle" textLength="14.01" lengthAdjust="spacingAndGlyphs" >120</text>
<text x="561.8800000000001" y="520.8" font-size="8.82" fill="#202020" stroke="#202020" stroke-width="0.22" text-anchor="middle" textLength="14.01" lengthAdjust="spacingAndGlyphs" >130</text>
<text x="591.6400000000001" y="520.8" font-size="8.82" fill="#202020" stroke="#202020" stroke-width="0.22" text-anchor="middle" textLength="14.01" lengthAdjust="spacingAndGlyphs" >140</text>
<text x="621.4000000000001" y="520.8" font-size="8.82" fill="#202020" stroke="#202020" stroke-width="0.22" text-anchor="middle" textLength="14.01" lengthAdjust="spacingAndGlyphs" >150</text>
<text x="651.1600000000001" y="520.8" font-size="8.82" fill="#202020" stroke="#202020" stroke-width="0.22" text-anchor="middle" textLength="14.01" lengthAdjust="spacingAndGlyphs" >160</text>
<text x="680.9200000000001" y="520.8" font-size="8.82" fill="#202020" stroke="#202020" stroke-width="0.22" text-anchor="middle" textLength="14.01" lengthAdjust="spacingAndGlyphs" >170</text>
<text x="710.6800000000001" y="520.8" font-size="8.82" fill="#202020" stroke="#202020" stroke-width="0.22" text-anchor="middle" textLength="14.01" lengthAdjust="spacingAndGlyphs" >180</text>
<text x="740.44" y="520.8" font-size="8.82" fill="#202020" stroke="#202020" stroke-width="0.22" text-anchor="middle" textLength="14.01" lengthAdjust="spacingAndGlyphs" >190</text>
<text x="770.2" y="520.8" font-size="8.82" fill="#202020" stroke="#202020" stroke-width="0.22" text-anchor="middle" textLength="14.01" lengthAdjust="spacingAndGlyphs" >200</text>
<text x="799.96" y="520.8" font-size="8.82" fill="#202020" stroke="#202020" stroke-width="0.22" text-anchor="middle" textLength="14.01" lengthAdjust="spacingAndGlyphs" >210</text>
<text x="829.72" y="520.8" font-size="8.82" fill="#202020" stroke="#202020" stroke-width="0.22" text-anchor="middle" textLength="14.01" lengthAdjust="spacingAndGlyphs" >220</text>
<text x="859.48" y="520.8" font-size="8.82" fill="#202020" stroke="#202020" stroke-width="0.22" text-anchor="middle" textLength="14.01" lengthAdjust="spacingAndGlyphs" >230</text>
<text x="889.24" y="520.8" font-size="8.82" fill="#202020" stroke="#202020" stroke-width="0.22" text-anchor="middle" textLength="14.01" lengthAdjust="spacingAndGlyphs" >240</text>
<text x="919.0" y="520.8" font-size="8.82" fill="#202020" stroke="#202020" stroke-width="0.22" text-anchor="middle" textLength="14.01" lengthAdjust="spacingAndGlyphs" >250</text>
<text x="948.76" y="520.8" font-size="8.82" fill="#202020" stroke="#202020" stroke-width="0.22" text-anchor="middle" textLength="14.01" lengthAdjust="spacingAndGlyphs" >260</text>
<text x="978.52" y="520.8" font-size="8.82" fill="#202020" stroke="#202020" stroke-width="0.22" text-anchor="middle" textLength="14.01" lengthAdjust="spacingAndGlyphs" >270</text>
<text x="1008.28" y="520.8" font-size="8.82" fill="#202020" stroke="#202020" stroke-width="0.22" text-anchor="middle" textLength="14.01" lengthAdjust="spacingAndGlyphs" >280</text>
<line x1="1012.0" y1="506" x2="1022" y2="516.0" stroke="#505050" stroke-width="0.8" />
<line x1="1015.2" y1="506" x2="1022" y2="512.8" stroke="#505050" stroke-width="0.8" />
<line x1="1018.4" y1="506" x2="1022" y2="509.6" stroke="#505050" stroke-width="0.8" />
<rect x="0" y="522" width="1022" height="23" fill="#f3f3f3" />
<line x1="0" y1="535.0" x2="10.0" y2="545" stroke="#505050" stroke-width="0.8" />
<line x1="0" y1="538.2" x2="6.8" y2="545" stroke="#505050" stroke-width="0.8" />
<line x1="0" y1="541.4" x2="3.5999999999999996" y2="545" stroke="#505050" stroke-width="0.8" />
<g transform="translate(0,2.8)">
<rect x="7.8" y="524.5" width="22.5" height="14" fill="#ffffff" stroke="#c9c9c9" stroke-width="1" rx="3" />
<circle cx="15.5" cy="531.5" r="5" fill="#e8e0e0" stroke="#303030" stroke-width="1"/><path d="M16.5,529 L14.5,531.5 L16,533" stroke="#303030" stroke-width="0.9" fill="none"/>
<path d="M23.8,530.5 L25.8,526.9 L27.8,530.5 Z M23.8,532.7 L25.8,536.3000000000001 L27.8,532.7 Z" fill="#6b5fe0"/>
<text x="39.5" y="535.6" font-size="8.82" fill="#2a2a2a" stroke="#2a2a2a" stroke-width="0.22" text-anchor="start" textLength="18.05" lengthAdjust="spacingAndGlyphs" >View</text>
<text x="73.8" y="535.6" font-size="8.82" fill="#2a2a2a" stroke="#2a2a2a" stroke-width="0.22" text-anchor="start" textLength="26.13" lengthAdjust="spacingAndGlyphs" >Marker</text>
<text x="114.7" y="535.6" font-size="8.82" fill="#2a2a2a" stroke="#2a2a2a" stroke-width="0.22" text-anchor="start" textLength="24.27" lengthAdjust="spacingAndGlyphs" >Frame</text>
<text x="153.8" y="535.6" font-size="8.82" fill="#2a2a2a" stroke="#2a2a2a" stroke-width="0.22" text-anchor="start" textLength="34.08" lengthAdjust="spacingAndGlyphs" >Playback</text>
<rect x="197.9" y="525.0" width="28" height="13" fill="#ffffff" stroke="#c9c9c9" stroke-width="1" rx="3" />
<line x1="211.5" y1="525" x2="211.5" y2="538" stroke="#d6e2e0" stroke-width="1" />
<circle cx="204.5" cy="531.5" r="4.6" fill="#f0f0f0" stroke="#303030" stroke-width="0.9"/><path d="M204.5,531.5 V526.9 A4.6,4.6 0 0 1 209.1,531.5 Z" fill="#f0a020"/>
<rect x="215.5" y="530" width="8.5" height="6.5" fill="#e8e8e8" stroke="#404040" stroke-width="0.9"/><path d="M217,530 v-2 a2.7,2.7 0 0 1 5.4,0 v2" stroke="#404040" stroke-width="0.9" fill="none"/>
<rect x="234.5" y="524.5" width="82" height="14" fill="#fcfcfc" stroke="#e4ecea" stroke-width="1" rx="3" />
<path d="M239,529 L236,532 L239,535 Z" fill="#6a5fe0"/>
<text x="242.6" y="535.5" font-size="8.82" fill="#2a2a2a" stroke="#2a2a2a" stroke-width="0.22" text-anchor="start" textLength="20.07" lengthAdjust="spacingAndGlyphs" >Start:</text>
<text x="304" y="535.5" font-size="8.82" fill="#2a2a2a" stroke="#2a2a2a" stroke-width="0.22" text-anchor="end" textLength="4.67" lengthAdjust="spacingAndGlyphs" >1</text>
<path d="M310,529 L313,532 L310,535 Z" fill="#6a5fe0"/>
<rect x="320.1" y="524.5" width="79.4" height="14" fill="#fcfcfc" stroke="#e4ecea" stroke-width="1" rx="3" />
<path d="M325,529 L322,532 L325,535 Z" fill="#6a5fe0"/>
<text x="329.5" y="535.5" font-size="8.82" fill="#2a2a2a" stroke="#2a2a2a" stroke-width="0.22" text-anchor="start" textLength="17.28" lengthAdjust="spacingAndGlyphs" >End:</text>
<text x="389" y="535.5" font-size="8.82" fill="#2a2a2a" stroke="#2a2a2a" stroke-width="0.22" text-anchor="end" textLength="14.01" lengthAdjust="spacingAndGlyphs" >250</text>
<path d="M395,529 L398,532 L395,535 Z" fill="#6a5fe0"/>
<rect x="405.5" y="524.5" width="65" height="14" fill="#fcfcfc" stroke="#e4ecea" stroke-width="1" rx="3" />
<path d="M413,529 L410,532 L413,535 Z" fill="#6a5fe0"/>
<text x="459" y="535.5" font-size="8.82" fill="#2a2a2a" stroke="#2a2a2a" stroke-width="0.22" text-anchor="end" textLength="4.67" lengthAdjust="spacingAndGlyphs" >1</text>
<path d="M465,529 L468,532 L465,535 Z" fill="#6a5fe0"/>
<rect x="485.9" y="525.1" width="87.8" height="13" fill="#fcfcfc" stroke="#d8e8e4" stroke-width="1" rx="3" />
<line x1="499.5" y1="525" x2="499.5" y2="538.5" stroke="#d6e6e2" stroke-width="1" />
<line x1="514.2" y1="525" x2="514.2" y2="538.5" stroke="#d6e6e2" stroke-width="1" />
<line x1="529.3" y1="525" x2="529.3" y2="538.5" stroke="#d6e6e2" stroke-width="1" />
<line x1="544.5" y1="525" x2="544.5" y2="538.5" stroke="#d6e6e2" stroke-width="1" />
<line x1="559.6" y1="525" x2="559.6" y2="538.5" stroke="#d6e6e2" stroke-width="1" />
<rect x="486.8" y="528.2" width="1.7" height="7.5" fill="#404040"/><path d="M492.8,528.2 L488.6,531.95 L492.8,535.7 Z M497.5,528.2 L493.3,531.95 L497.5,535.7 Z" fill="#b8b8b8" stroke="#404040" stroke-width="0.9"/>
<path d="M506.5,528.2 L502,531.95 L506.5,535.7 Z M511,528.2 L506.5,531.95 L511,535.7 Z" fill="#d0d0d0" stroke="#404040" stroke-width="0.9"/>
<path d="M526,526.6 L517.5,531.95 L526,537.3 Z" fill="#d8d8d8" stroke="#303030" stroke-width="0.9"/>
<path d="M532.5,526.6 L541,531.95 L532.5,537.3 Z" fill="#d8d8d8" stroke="#303030" stroke-width="0.9"/>
<path d="M547.5,528.2 L552,531.95 L547.5,535.7 Z M552,528.2 L556.5,531.95 L552,535.7 Z" fill="#d0d0d0" stroke="#404040" stroke-width="0.9"/>
<path d="M561.5,528.2 L565.7,531.95 L561.5,535.7 Z M566,528.2 L570.2,531.95 L566,535.7 Z" fill="#b8b8b8" stroke="#404040" stroke-width="0.9"/><rect x="570.6" y="528.2" width="1.7" height="7.5" fill="#404040"/>
<rect x="579.5" y="524.5" width="84.5" height="14" fill="#ffffff" stroke="#c9c9c9" stroke-width="1" rx="3" />
<text x="585.5" y="535.5" font-size="8.82" fill="#2a2a2a" stroke="#2a2a2a" stroke-width="0.22" text-anchor="start" textLength="31.75" lengthAdjust="spacingAndGlyphs" >No Sync</text>
<path d="M657,530.9 L659,527.3 L661,530.9 Z M657,533.1 L659,536.7 L661,533.1 Z" fill="#6b5fe0"/>
<rect x="676.9" y="524.5" width="13.6" height="14" fill="#f6f6f6" stroke="#dcdcdc" stroke-width="1" rx="3" />
<circle cx="683.7" cy="532" r="3.6" fill="#e04020" stroke="#803020" stroke-width="0.6"/>
<rect x="696.2" y="524.5" width="22" height="14" fill="#f6f6f6" stroke="#dcdcdc" stroke-width="1" rx="3" />
<path d="M704,528.5 L707.5,532 L704,535.5 L700.5,532 Z" fill="#f0b030" stroke="#806010" stroke-width="0.6"/>
<path d="M712,530.9 L714,527.3 L716,530.9 Z M712,533.1 L714,536.7 L716,533.1 Z" fill="#6b5fe0"/>
<rect x="723.0" y="524.5" width="97" height="14" fill="#ffffff" stroke="#c8dcdc" stroke-width="1" rx="3" />
<path d="M727,528 v7 h5 M727,528 h2.5 v6 M730,534 l4,-3" stroke="#505050" stroke-width="1.1" fill="none"/><circle cx="735" cy="531" r="1.8" fill="#d0c090" stroke="#505050" stroke-width="0.6"/>
<rect x="822.3" y="524.5" width="27" height="14" fill="#fcfcfc" stroke="#e4ecea" stroke-width="1" rx="3" />
<line x1="835.7" y1="524.5" x2="835.7" y2="539.5" stroke="#d6e2e0" stroke-width="1" />
<path d="M825,536 L832,529 M830,527 a2.5,2.5 0 1 1 3,3" stroke="#606060" stroke-width="1.6" fill="none"/>
<path d="M839,536 L846,529 M844,527 a2.5,2.5 0 1 1 3,3" stroke="#606060" stroke-width="1.6" fill="none"/><path d="M839,528 L847,536 M847,528 L839,536" stroke="#d04040" stroke-width="1.2"/>
</g>
<rect x="0" y="544.3" width="1024" height="1.7" fill="#404040" />
<rect x="1022" y="16" width="2" height="530" fill="#f8f8f8" />
</svg></body></html>
